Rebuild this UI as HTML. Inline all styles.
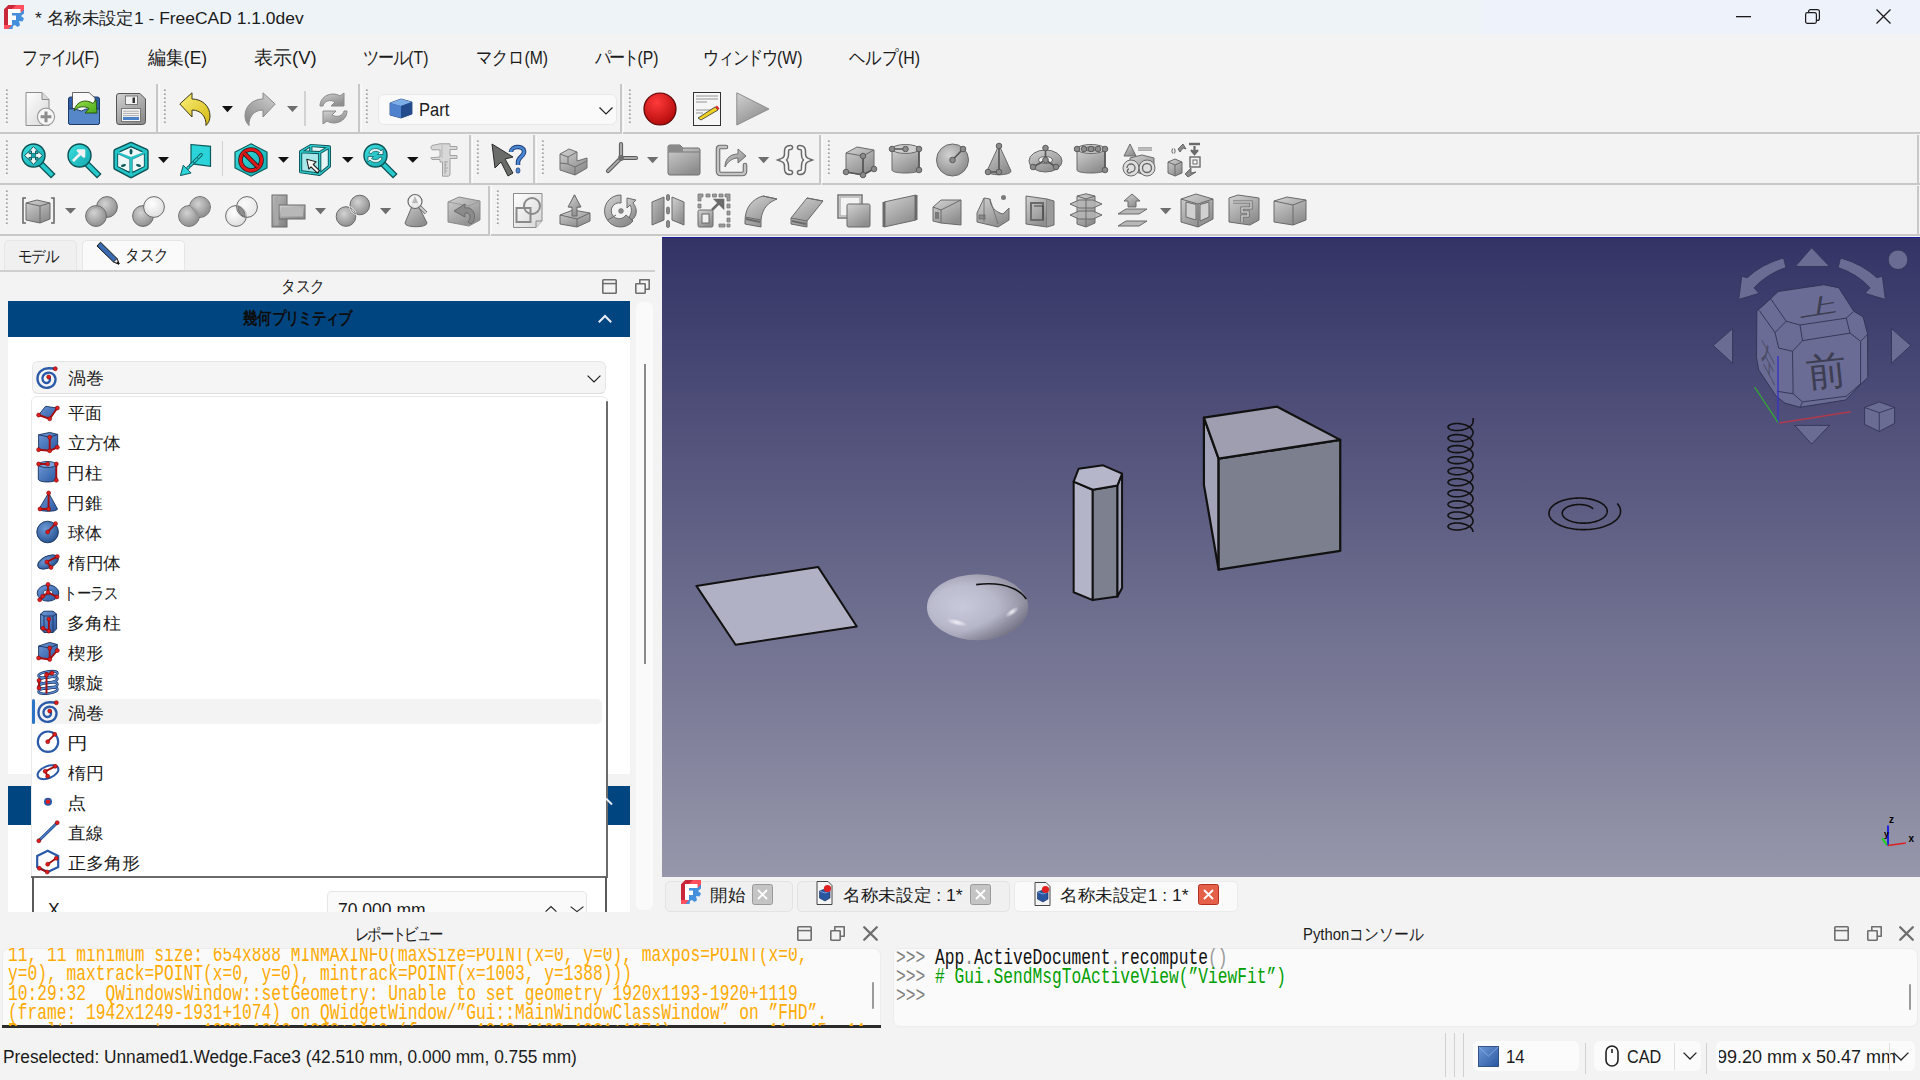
<!DOCTYPE html><html><head><meta charset="utf-8"><style>
*{box-sizing:border-box;margin:0;padding:0}
html,body{width:1920px;height:1080px;overflow:hidden;background:#f3f3f3;font-family:"Liberation Sans",sans-serif;color:#1b1b1b}
.ab{position:absolute}
.t{position:absolute;white-space:nowrap;line-height:1;transform-origin:0 0}
svg{position:absolute;overflow:visible}
</style></head><body>
<div class="ab" style="left:0px;top:0px;width:1482px;height:34px;background:#eef3f8"></div>
<div class="ab" style="left:1482px;top:0px;width:438px;height:34px;background:#eef2fb"></div>
<div class="t" style="left:35.00px;top:10px;font-size:17px;transform:scaleX(1.0267);">* 名称未設定1 - FreeCAD 1.1.0dev</div>
<svg style="left:1736px;top:16px" width="15" height="2" viewBox="0 0 15 2"><rect x="0" y="0" width="15" height="1.3" fill="#1a1a1a"/></svg>
<svg style="left:1805px;top:9px" width="15" height="15" viewBox="0 0 15 15"><rect x="0.6" y="3.6" width="10.8" height="10.8" rx="1.8" fill="none" stroke="#1a1a1a" stroke-width="1.2"/><path d="M3.6 3.6 V2.6 a2 2 0 0 1 2-2 H12.4 a2 2 0 0 1 2 2 V9.4 a2 2 0 0 1 -2 2 H11.4" fill="none" stroke="#1a1a1a" stroke-width="1.2"/></svg>
<svg style="left:1876px;top:9px" width="15" height="15" viewBox="0 0 15 15"><path d="M0.5 0.5 L14.5 14.5 M14.5 0.5 L0.5 14.5" stroke="#1a1a1a" stroke-width="1.3"/></svg>
<div class="t" style="left:22.30px;top:49px;font-size:18.5px;transform:scaleX(0.8500);"><span style="letter-spacing:-2.191px">ファイル</span>(F)</div>
<div class="t" style="left:147.50px;top:49px;font-size:18.5px;transform:scaleX(0.9435);">編集(E)</div>
<div class="t" style="left:254.00px;top:49px;font-size:18.5px;transform:scaleX(1.0000);">表示(V)</div>
<div class="t" style="left:363.15px;top:49px;font-size:18.5px;transform:scaleX(0.8500);"><span style="letter-spacing:-1.235px">ツール</span>(T)</div>
<div class="t" style="left:476.15px;top:49px;font-size:18.5px;transform:scaleX(0.8500);"><span style="letter-spacing:-0.020px">マクロ</span>(M)</div>
<div class="t" style="left:595.00px;top:49px;font-size:18.5px;transform:scaleX(0.8500);"><span style="letter-spacing:-2.294px">パート</span>(P)</div>
<div class="t" style="left:703.30px;top:49px;font-size:18.5px;transform:scaleX(0.8500);"><span style="letter-spacing:-1.576px">ウィンドウ</span>(W)</div>
<div class="t" style="left:849.00px;top:49px;font-size:18.5px;transform:scaleX(0.8598);"><span style="letter-spacing:0.000px">ヘルプ</span>(H)</div>
<div class="ab" style="left:0px;top:132px;width:157.5px;height:2px;background:#c8c8c8"></div>
<div class="ab" style="left:155.5px;top:84px;width:2px;height:50px;background:#c8c8c8"></div>
<div class="ab" style="left:158.5px;top:84px;width:1px;height:48px;background:#fbfbfb"></div>
<div class="ab" style="left:157.5px;top:132px;width:202.0px;height:2px;background:#c8c8c8"></div>
<div class="ab" style="left:357.5px;top:84px;width:2px;height:50px;background:#c8c8c8"></div>
<div class="ab" style="left:360.5px;top:84px;width:1px;height:48px;background:#fbfbfb"></div>
<div class="ab" style="left:359.5px;top:132px;width:262.0px;height:2px;background:#c8c8c8"></div>
<div class="ab" style="left:619.5px;top:84px;width:2px;height:50px;background:#c8c8c8"></div>
<div class="ab" style="left:622.5px;top:84px;width:1px;height:48px;background:#fbfbfb"></div>
<div class="ab" style="left:622.5px;top:132px;width:1297.5px;height:2px;background:#c8c8c8"></div>
<div class="ab" style="left:0px;top:183px;width:470.5px;height:2px;background:#c8c8c8"></div>
<div class="ab" style="left:468.5px;top:135px;width:2px;height:50px;background:#c8c8c8"></div>
<div class="ab" style="left:471.5px;top:135px;width:1px;height:48px;background:#fbfbfb"></div>
<div class="ab" style="left:470.5px;top:183px;width:64.0px;height:2px;background:#c8c8c8"></div>
<div class="ab" style="left:532.5px;top:135px;width:2px;height:50px;background:#c8c8c8"></div>
<div class="ab" style="left:535.5px;top:135px;width:1px;height:48px;background:#fbfbfb"></div>
<div class="ab" style="left:534.5px;top:183px;width:286.5px;height:2px;background:#c8c8c8"></div>
<div class="ab" style="left:819px;top:135px;width:2px;height:50px;background:#c8c8c8"></div>
<div class="ab" style="left:822px;top:135px;width:1px;height:48px;background:#fbfbfb"></div>
<div class="ab" style="left:822px;top:183px;width:1098px;height:2px;background:#c8c8c8"></div>
<div class="ab" style="left:0px;top:234px;width:490px;height:2px;background:#c8c8c8"></div>
<div class="ab" style="left:488px;top:186px;width:2px;height:50px;background:#c8c8c8"></div>
<div class="ab" style="left:491px;top:186px;width:1px;height:48px;background:#fbfbfb"></div>
<div class="ab" style="left:491px;top:234px;width:1429px;height:2px;background:#c8c8c8"></div>
<div class="ab" style="left:1917px;top:135px;width:2px;height:50px;background:#c8c8c8"></div>
<div class="ab" style="left:1917px;top:186px;width:2px;height:50px;background:#c8c8c8"></div>
<svg style="left:0;top:0;width:0;height:0" width="0" height="0"><defs>
<linearGradient id="gg" x1="0" y1="0" x2="0.6" y2="1"><stop offset="0" stop-color="#d2d2d2"/><stop offset="1" stop-color="#8e8e8e"/></linearGradient>
<linearGradient id="gg2" x1="0" y1="0" x2="1" y2="1"><stop offset="0" stop-color="#bdbdbd"/><stop offset="1" stop-color="#7e7e7e"/></linearGradient>
<linearGradient id="gl" x1="0" y1="0" x2="1" y2="1"><stop offset="0" stop-color="#ffffff"/><stop offset="1" stop-color="#d6d6d6"/></linearGradient>
<radialGradient id="gs" cx="0.4" cy="0.35" r="0.7"><stop offset="0" stop-color="#d2d2d2"/><stop offset="1" stop-color="#8a8a8a"/></radialGradient>
<radialGradient id="gsw" cx="0.4" cy="0.35" r="0.7"><stop offset="0" stop-color="#ffffff"/><stop offset="1" stop-color="#dcdcdc"/></radialGradient>
<linearGradient id="gt" x1="0" y1="0" x2="1" y2="1"><stop offset="0" stop-color="#3ee0e0"/><stop offset="1" stop-color="#12a8ae"/></linearGradient>
<linearGradient id="gy" x1="0" y1="0" x2="1" y2="1"><stop offset="0" stop-color="#fbf07a"/><stop offset="1" stop-color="#d4b812"/></linearGradient>
<radialGradient id="gr" cx="0.4" cy="0.3" r="0.75"><stop offset="0" stop-color="#ff3a3a"/><stop offset="1" stop-color="#b00808"/></radialGradient>
<linearGradient id="gb" x1="0" y1="0" x2="1" y2="1"><stop offset="0" stop-color="#6f9fe0"/><stop offset="1" stop-color="#2a5aa8"/></linearGradient>
<linearGradient id="ggreen" x1="0" y1="0" x2="1" y2="1"><stop offset="0" stop-color="#9be24a"/><stop offset="1" stop-color="#4aa81a"/></linearGradient>
</defs></svg>
<svg style="left:5px;top:89px" width="3" height="38" viewBox="0 0 3 38"><rect x="0.8" y="0.3" width="2" height="2" rx="0.8" fill="#a6a6a6"/><rect x="0" y="2.3" width="1.6" height="1" fill="#ffffff"/><rect x="0.8" y="4.3" width="2" height="2" rx="0.8" fill="#a6a6a6"/><rect x="0" y="6.3" width="1.6" height="1" fill="#ffffff"/><rect x="0.8" y="8.3" width="2" height="2" rx="0.8" fill="#a6a6a6"/><rect x="0" y="10.3" width="1.6" height="1" fill="#ffffff"/><rect x="0.8" y="12.3" width="2" height="2" rx="0.8" fill="#a6a6a6"/><rect x="0" y="14.3" width="1.6" height="1" fill="#ffffff"/><rect x="0.8" y="16.3" width="2" height="2" rx="0.8" fill="#a6a6a6"/><rect x="0" y="18.3" width="1.6" height="1" fill="#ffffff"/><rect x="0.8" y="20.3" width="2" height="2" rx="0.8" fill="#a6a6a6"/><rect x="0" y="22.3" width="1.6" height="1" fill="#ffffff"/><rect x="0.8" y="24.3" width="2" height="2" rx="0.8" fill="#a6a6a6"/><rect x="0" y="26.3" width="1.6" height="1" fill="#ffffff"/><rect x="0.8" y="28.3" width="2" height="2" rx="0.8" fill="#a6a6a6"/><rect x="0" y="30.3" width="1.6" height="1" fill="#ffffff"/><rect x="0.8" y="32.3" width="2" height="2" rx="0.8" fill="#a6a6a6"/><rect x="0" y="34.3" width="1.6" height="1" fill="#ffffff"/></svg>
<svg style="left:25px;top:92px" width="32" height="34" viewBox="0 0 32 34"><path d="M1,0.5 H17 L24,7.5 V33.5 H1 Z" fill="url(#gl)" stroke="#8c8c8c"/><path d="M17,0.5 V7.5 H24" fill="#d8d8d8" stroke="#8c8c8c"/><circle cx="21" cy="24.8" r="8.6" fill="#f6f6f6" stroke="#9c9c9c" stroke-width="1.2"/><path d="M21,19.4 V30.2 M15.6,24.8 H26.4" stroke="#8c8c8c" stroke-width="3"/></svg>
<svg style="left:68px;top:92px" width="32" height="33" viewBox="0 0 32 33"><rect x="0.5" y="5" width="31" height="27.5" rx="2" fill="#2f5fa8" stroke="#1d3a66"/><path d="M4.5,0.5 H21 L27,6 V22 H4.5 Z" fill="#fafafa" stroke="#444" stroke-width="0.8"/><path d="M0.5,17 Q7,15.5 10,18 Q13,20.5 18,17 H31.5 V30.5 Q31.5,32.5 29.5,32.5 H2.5 Q0.5,32.5 0.5,30.5 Z" fill="#5587c9" stroke="#1d3a66"/><path d="M6,19 C8,9 18,6.5 25,11.5 L28,7.5 L29,21 L17,21 L21,16.5 C16,13.5 10,14.5 6,19 Z" fill="url(#ggreen)" stroke="#1f4d0a" stroke-width="0.9"/></svg>
<svg style="left:116px;top:93px" width="30" height="32" viewBox="0 0 30 32"><path d="M3,0.5 H24 L29.5,6 V28.5 Q29.5,31.5 26.5,31.5 H3 Q0.5,31.5 0.5,28.5 V3 Q0.5,0.5 3,0.5Z" fill="url(#gg)" stroke="#555"/><rect x="9.5" y="3" width="12" height="8.5" fill="#f2f2f2" stroke="#777"/><rect x="16.5" y="4.5" width="2.5" height="5.5" fill="#333"/><rect x="5.5" y="15.5" width="19" height="13" fill="#f4f4f4" stroke="#777"/><path d="M7,18.2 H23 M7,20.4 H23 M7,22.6 H23" stroke="#999" stroke-width="0.8"/><rect x="7" y="24" width="16" height="3" fill="#4a82c8"/></svg>
<svg style="left:163px;top:89px" width="3" height="38" viewBox="0 0 3 38"><rect x="0.8" y="0.3" width="2" height="2" rx="0.8" fill="#a6a6a6"/><rect x="0" y="2.3" width="1.6" height="1" fill="#ffffff"/><rect x="0.8" y="4.3" width="2" height="2" rx="0.8" fill="#a6a6a6"/><rect x="0" y="6.3" width="1.6" height="1" fill="#ffffff"/><rect x="0.8" y="8.3" width="2" height="2" rx="0.8" fill="#a6a6a6"/><rect x="0" y="10.3" width="1.6" height="1" fill="#ffffff"/><rect x="0.8" y="12.3" width="2" height="2" rx="0.8" fill="#a6a6a6"/><rect x="0" y="14.3" width="1.6" height="1" fill="#ffffff"/><rect x="0.8" y="16.3" width="2" height="2" rx="0.8" fill="#a6a6a6"/><rect x="0" y="18.3" width="1.6" height="1" fill="#ffffff"/><rect x="0.8" y="20.3" width="2" height="2" rx="0.8" fill="#a6a6a6"/><rect x="0" y="22.3" width="1.6" height="1" fill="#ffffff"/><rect x="0.8" y="24.3" width="2" height="2" rx="0.8" fill="#a6a6a6"/><rect x="0" y="26.3" width="1.6" height="1" fill="#ffffff"/><rect x="0.8" y="28.3" width="2" height="2" rx="0.8" fill="#a6a6a6"/><rect x="0" y="30.3" width="1.6" height="1" fill="#ffffff"/><rect x="0.8" y="32.3" width="2" height="2" rx="0.8" fill="#a6a6a6"/><rect x="0" y="34.3" width="1.6" height="1" fill="#ffffff"/></svg>
<svg style="left:179px;top:92px" width="33" height="34" viewBox="0 0 33 34"><path d="M0.8,12 L13,0.8 L13,7 C23,7 31,14 31,24 C31,28 29.5,31 27,33.5 C27.5,25 22,18 13,18 L13,25 Z" fill="url(#gy)" stroke="#3d3a1a" stroke-width="1"/></svg>
<svg style="left:222px;top:105.8px" width="11" height="6.200000000000003" viewBox="0 0 11 6.200000000000003"><polygon points="0,0 11,0 5.5,6.200000000000003" fill="#111"/></svg>
<svg style="left:244px;top:92px" width="33" height="34" viewBox="0 0 33 34"><g transform="translate(32,0) scale(-1,1)"><path d="M0.8,12 L13,0.8 L13,7 C23,7 31,14 31,24 C31,28 29.5,31 27,33.5 C27.5,25 22,18 13,18 L13,25 Z" fill="url(#gg)" stroke="#8a8a8a" stroke-width="1"/></g></svg>
<svg style="left:287px;top:106px" width="11" height="6" viewBox="0 0 11 6"><polygon points="0,0 11,0 5.5,6" fill="#6e6e6e"/></svg>
<div class="ab" style="left:304px;top:91px;width:1.5px;height:35px;background:#d2d2d2"></div>
<svg style="left:318px;top:92px" width="31" height="34" viewBox="0 0 31 34"><path d="M2,14 C2,4 14,-1 22,4 L26,1 V14 H13 L17,10 C12,7 6,9 5,14 Z" fill="url(#gg)" stroke="#8a8a8a"/><path d="M29,19 C29,29 17,34 9,29 L5,32 V19 H18 L14,23 C19,26 25,24 26,19 Z" fill="url(#gg)" stroke="#8a8a8a"/></svg>
<svg style="left:365px;top:89px" width="3" height="38" viewBox="0 0 3 38"><rect x="0.8" y="0.3" width="2" height="2" rx="0.8" fill="#a6a6a6"/><rect x="0" y="2.3" width="1.6" height="1" fill="#ffffff"/><rect x="0.8" y="4.3" width="2" height="2" rx="0.8" fill="#a6a6a6"/><rect x="0" y="6.3" width="1.6" height="1" fill="#ffffff"/><rect x="0.8" y="8.3" width="2" height="2" rx="0.8" fill="#a6a6a6"/><rect x="0" y="10.3" width="1.6" height="1" fill="#ffffff"/><rect x="0.8" y="12.3" width="2" height="2" rx="0.8" fill="#a6a6a6"/><rect x="0" y="14.3" width="1.6" height="1" fill="#ffffff"/><rect x="0.8" y="16.3" width="2" height="2" rx="0.8" fill="#a6a6a6"/><rect x="0" y="18.3" width="1.6" height="1" fill="#ffffff"/><rect x="0.8" y="20.3" width="2" height="2" rx="0.8" fill="#a6a6a6"/><rect x="0" y="22.3" width="1.6" height="1" fill="#ffffff"/><rect x="0.8" y="24.3" width="2" height="2" rx="0.8" fill="#a6a6a6"/><rect x="0" y="26.3" width="1.6" height="1" fill="#ffffff"/><rect x="0.8" y="28.3" width="2" height="2" rx="0.8" fill="#a6a6a6"/><rect x="0" y="30.3" width="1.6" height="1" fill="#ffffff"/><rect x="0.8" y="32.3" width="2" height="2" rx="0.8" fill="#a6a6a6"/><rect x="0" y="34.3" width="1.6" height="1" fill="#ffffff"/></svg>
<div class="ab" style="left:378px;top:94px;width:239px;height:31px;background:#fafafa;border:1px solid #e8e8e8;border-radius:6px"></div>
<svg style="left:389px;top:98px" width="24" height="21" viewBox="0 0 24 21"><path d="M1,5 L12,1 L23,4 V16 L12,20 L1,17 Z" fill="#2f5ea8" stroke="#1a3a70" stroke-width="0.8"/><path d="M1,5 L12,8 L23,4 L12,1 Z" fill="#7eaee8"/><path d="M12,8 V20 L23,16 V4 Z" fill="#244c8c"/><path d="M1,5 L12,8 V20 L1,17 Z" fill="#4f82cc"/></svg>
<div class="t" style="left:418.63px;top:100px;font-size:19px;transform:scaleX(0.8676);">Part</div>
<svg style="left:599px;top:107px" width="14" height="8" viewBox="0 0 14 8"><path d="M0.5,0.5 L7,7 L13.5,0.5" fill="none" stroke="#222" stroke-width="1.2"/></svg>
<svg style="left:628px;top:89px" width="3" height="38" viewBox="0 0 3 38"><rect x="0.8" y="0.3" width="2" height="2" rx="0.8" fill="#a6a6a6"/><rect x="0" y="2.3" width="1.6" height="1" fill="#ffffff"/><rect x="0.8" y="4.3" width="2" height="2" rx="0.8" fill="#a6a6a6"/><rect x="0" y="6.3" width="1.6" height="1" fill="#ffffff"/><rect x="0.8" y="8.3" width="2" height="2" rx="0.8" fill="#a6a6a6"/><rect x="0" y="10.3" width="1.6" height="1" fill="#ffffff"/><rect x="0.8" y="12.3" width="2" height="2" rx="0.8" fill="#a6a6a6"/><rect x="0" y="14.3" width="1.6" height="1" fill="#ffffff"/><rect x="0.8" y="16.3" width="2" height="2" rx="0.8" fill="#a6a6a6"/><rect x="0" y="18.3" width="1.6" height="1" fill="#ffffff"/><rect x="0.8" y="20.3" width="2" height="2" rx="0.8" fill="#a6a6a6"/><rect x="0" y="22.3" width="1.6" height="1" fill="#ffffff"/><rect x="0.8" y="24.3" width="2" height="2" rx="0.8" fill="#a6a6a6"/><rect x="0" y="26.3" width="1.6" height="1" fill="#ffffff"/><rect x="0.8" y="28.3" width="2" height="2" rx="0.8" fill="#a6a6a6"/><rect x="0" y="30.3" width="1.6" height="1" fill="#ffffff"/><rect x="0.8" y="32.3" width="2" height="2" rx="0.8" fill="#a6a6a6"/><rect x="0" y="34.3" width="1.6" height="1" fill="#ffffff"/></svg>
<svg style="left:643px;top:92px" width="34" height="34" viewBox="0 0 34 34"><circle cx="17" cy="17" r="16" fill="url(#gr)" stroke="#5a0000" stroke-width="1.2"/></svg>
<svg style="left:693px;top:92px" width="28" height="34" viewBox="0 0 28 34"><rect x="0.5" y="0.5" width="27" height="33" fill="#f6f6f6" stroke="#333"/><path d="M3,4 H25 M3,7 H25 M3,10 H14 M3,18 H25 M3,21 H10" stroke="#888" stroke-width="0.9"/><path d="M5,26 L22,15 L25,18 L8,28 Z" fill="#f0d020" stroke="#333" stroke-width="0.8"/><path d="M22,15 L24,13.5 L26.5,16.5 L25,18Z" fill="#d83030"/></svg>
<svg style="left:736px;top:92px" width="34" height="34" viewBox="0 0 34 34"><path d="M0.8,0.8 L33,17 L0.8,33 Z" fill="url(#gg)" stroke="#8c8c8c" stroke-width="1"/></svg>
<svg style="left:5px;top:140px" width="3" height="38" viewBox="0 0 3 38"><rect x="0.8" y="0.3" width="2" height="2" rx="0.8" fill="#a6a6a6"/><rect x="0" y="2.3" width="1.6" height="1" fill="#ffffff"/><rect x="0.8" y="4.3" width="2" height="2" rx="0.8" fill="#a6a6a6"/><rect x="0" y="6.3" width="1.6" height="1" fill="#ffffff"/><rect x="0.8" y="8.3" width="2" height="2" rx="0.8" fill="#a6a6a6"/><rect x="0" y="10.3" width="1.6" height="1" fill="#ffffff"/><rect x="0.8" y="12.3" width="2" height="2" rx="0.8" fill="#a6a6a6"/><rect x="0" y="14.3" width="1.6" height="1" fill="#ffffff"/><rect x="0.8" y="16.3" width="2" height="2" rx="0.8" fill="#a6a6a6"/><rect x="0" y="18.3" width="1.6" height="1" fill="#ffffff"/><rect x="0.8" y="20.3" width="2" height="2" rx="0.8" fill="#a6a6a6"/><rect x="0" y="22.3" width="1.6" height="1" fill="#ffffff"/><rect x="0.8" y="24.3" width="2" height="2" rx="0.8" fill="#a6a6a6"/><rect x="0" y="26.3" width="1.6" height="1" fill="#ffffff"/><rect x="0.8" y="28.3" width="2" height="2" rx="0.8" fill="#a6a6a6"/><rect x="0" y="30.3" width="1.6" height="1" fill="#ffffff"/><rect x="0.8" y="32.3" width="2" height="2" rx="0.8" fill="#a6a6a6"/><rect x="0" y="34.3" width="1.6" height="1" fill="#ffffff"/></svg>
<svg style="left:21px;top:143px" width="33" height="33" viewBox="0 0 33 33"><path d="M18,19 L30,31" stroke="#0c4f52" stroke-width="6.5" stroke-linecap="square"/><path d="M18,19 L30,31" stroke="#27c9cc" stroke-width="4" stroke-linecap="square"/><circle cx="12.5" cy="12.5" r="11.5" fill="url(#gt)" stroke="#0c4f52" stroke-width="1.4"/><path d="M12.5,3.5 L16.5,8 H14.5 V10.5 H17 V8.5 L21.5,12.5 L17,16.5 V14.5 H14.5 V17 H16.5 L12.5,21.5 L8.5,17 H10.5 V14.5 H8 V16.5 L3.5,12.5 L8,8.5 V10.5 H10.5 V8 H8.5 Z" fill="#eef8f8" stroke="#0c4f52" stroke-width="0.9"/><rect x="10.2" y="10.2" width="4.6" height="4.6" fill="#16a8ac" stroke="#0c4f52" stroke-width="0.6"/></svg>
<svg style="left:67px;top:143px" width="33" height="33" viewBox="0 0 33 33"><path d="M18,19 L30,31" stroke="#0c4f52" stroke-width="6.5" stroke-linecap="square"/><path d="M18,19 L30,31" stroke="#27c9cc" stroke-width="4" stroke-linecap="square"/><circle cx="12.5" cy="12.5" r="11.5" fill="url(#gt)" stroke="#0c4f52" stroke-width="1.4"/><path d="M6,18 L15,9 M11,7.5 H17 V13.5 Z" stroke="#f2f2f2" stroke-width="2.6" fill="#f2f2f2" stroke-linejoin="round"/></svg>
<svg style="left:114px;top:143px" width="34" height="34" viewBox="0 0 34 34"><path d="M17,1 L32.5,8 V25 L17,33 L1.5,25 V8 Z" fill="#eef8f8"/><g fill="none" stroke-linejoin="round"><path d="M17,1.5 L32,8.3 V24.7 L17,32.5 L2,24.7 V8.3 Z M2,8.3 L17,15.5 L32,8.3 M17,15.5 V32.5" stroke="#0c5052" stroke-width="5.4"/><path d="M17,1.5 L32,8.3 V24.7 L17,32.5 L2,24.7 V8.3 Z M2,8.3 L17,15.5 L32,8.3 M17,15.5 V32.5" stroke="#22c4c8" stroke-width="2.6"/></g><path d="M17,4.8 L28.5,9.6 L17,14 L5.5,9.6 Z" fill="#eef8f8"/><path d="M4.2,11.2 L15.4,16.6 V28.6 L4.2,23.2 Z M29.8,11.2 L18.6,16.6 V28.6 L29.8,23.2 Z" fill="#eef8f8"/><ellipse cx="17" cy="8.6" rx="1.5" ry="2.8" fill="#0c5a5c"/><ellipse cx="9.5" cy="22.5" rx="2.6" ry="1.3" fill="#0c5a5c" transform="rotate(-15 9.5 22.5)"/><ellipse cx="24.5" cy="22.5" rx="2.6" ry="1.3" fill="#0c5a5c" transform="rotate(15 24.5 22.5)"/></svg>
<svg style="left:158px;top:157px" width="11" height="6" viewBox="0 0 11 6"><polygon points="0,0 11,0 5.5,6" fill="#111"/></svg>
<svg style="left:180px;top:144px" width="32" height="32" viewBox="0 0 32 32"><path d="M11,0.5 L30.5,2.3 V22.3 L11,19.7 Z" fill="#2ad4d8" stroke="#0c5a5c" stroke-width="1.2"/><path d="M21.1,10.8 L7.8,24.1" stroke="#0c5a5c" stroke-width="3.4" stroke-dasharray="3.6,2.2" stroke-linecap="round"/><path d="M21.1,10.8 L7.8,24.1" stroke="#2ad4d8" stroke-width="1.6" stroke-dasharray="3.6,2.2" stroke-linecap="round"/><path d="M0.4,31.6 L3.3,21.2 L11.1,29 Z" fill="#2ad4d8" stroke="#0c5a5c" stroke-width="1"/></svg>
<div class="ab" style="left:221.5px;top:141px;width:1.5px;height:35px;background:#d0d0d0"></div>
<svg style="left:234px;top:143px" width="34" height="34" viewBox="0 0 34 34"><path d="M17,0.8 L33,9 V25 L17,33.2 L1,25 V9 Z" fill="url(#gt)" stroke="#0c5a5c" stroke-width="1.2"/><circle cx="17" cy="17" r="10.5" fill="none" stroke="#222" stroke-width="4.6"/><circle cx="17" cy="17" r="10.5" fill="none" stroke="#e01818" stroke-width="3"/><path d="M10,10 L24,24" stroke="#222" stroke-width="4.6"/><path d="M10,10 L24,24" stroke="#e01818" stroke-width="3"/></svg>
<svg style="left:278px;top:157px" width="11" height="5.699999999999989" viewBox="0 0 11 5.699999999999989"><polygon points="0,0 11,0 5.5,5.699999999999989" fill="#111"/></svg>
<svg style="left:300px;top:144px" width="31" height="31" viewBox="0 0 31 31"><path d="M0.6,7.7 L10.8,1.5 L29.4,2.9 V22.3 L19.7,30.3 L0.6,27.7 Z" fill="#e6f6f6"/><path d="M0.6,7.7 L19.7,8.6 V30.3 L0.6,27.7 Z" fill="#a8e8ea"/><g fill="none" stroke-linejoin="round"><path d="M0.6,7.7 L10.8,1.5 L29.4,2.9 V22.3 L19.7,30.3 L0.6,27.7 Z M0.6,7.7 L19.7,8.6 L29.4,2.9 M19.7,8.6 V30.3 M10.8,1.5 V7" stroke="#0c5052" stroke-width="3.2"/><path d="M0.6,7.7 L10.8,1.5 L29.4,2.9 V22.3 L19.7,30.3 L0.6,27.7 Z M0.6,7.7 L19.7,8.6 L29.4,2.9 M19.7,8.6 V30.3 M10.8,1.5 V7" stroke="#2cc8cc" stroke-width="1.4"/></g><path d="M6.8,15.3 L16,17.8 L13.3,20.5 L19.5,26.7 L17.2,29 L11,22.8 L8.8,25 Z" fill="#f6f6f2" stroke="#222" stroke-width="1.1" stroke-linejoin="round"/></svg>
<svg style="left:341.7px;top:157px" width="11.600000000000023" height="5.699999999999989" viewBox="0 0 11.600000000000023 5.699999999999989"><polygon points="0,0 11.600000000000023,0 5.800000000000011,5.699999999999989" fill="#111"/></svg>
<svg style="left:363px;top:143px" width="34" height="33" viewBox="0 0 34 33"><path d="M18,19 L30,31" stroke="#0c4f52" stroke-width="6.5" stroke-linecap="square"/><path d="M18,19 L30,31" stroke="#27c9cc" stroke-width="4" stroke-linecap="square"/><circle cx="12.5" cy="12.5" r="11.5" fill="url(#gt)" stroke="#0c4f52" stroke-width="1.4"/><path d="M6,10 C7,5 15,4 18,8 L20,6 V11.5 H14.5 L16.5,9.5 C14,7.5 9,8 8,11 Z M19,15 C18,20 10,21 7,17 L5,19 V13.5 H10.5 L8.5,15.5 C11,17.5 16,17 17,14 Z" fill="#e8f8f8" stroke="#0c4f52" stroke-width="0.7"/></svg>
<svg style="left:406.7px;top:157px" width="11.600000000000023" height="5.699999999999989" viewBox="0 0 11.600000000000023 5.699999999999989"><polygon points="0,0 11.600000000000023,0 5.800000000000011,5.699999999999989" fill="#111"/></svg>
<svg style="left:430px;top:143px" width="28" height="34" viewBox="0 0 28 34"><path d="M2,2.5 L10,0.8 H20 V3.5 H27 V6.5 H20 V12.5 H27 V15.5 H20 V32 L18.5,33.2 H12.5 V19 H10 V16.5 H2 L0.8,14.8 L10,14 V6.8 H2 L0.8,4.5 Z" fill="#d8d8d8" stroke="#a2a2a2" stroke-width="1"/><path d="M15,18 V31 M15,19 H18 M15,22 H17 M15,25 H18 M15,28 H17" stroke="#9a9a9a" stroke-width="0.8"/><path d="M12,2 V15" stroke="#b8b8b8" stroke-width="1"/></svg>
<svg style="left:476px;top:140px" width="3" height="38" viewBox="0 0 3 38"><rect x="0.8" y="0.3" width="2" height="2" rx="0.8" fill="#a6a6a6"/><rect x="0" y="2.3" width="1.6" height="1" fill="#ffffff"/><rect x="0.8" y="4.3" width="2" height="2" rx="0.8" fill="#a6a6a6"/><rect x="0" y="6.3" width="1.6" height="1" fill="#ffffff"/><rect x="0.8" y="8.3" width="2" height="2" rx="0.8" fill="#a6a6a6"/><rect x="0" y="10.3" width="1.6" height="1" fill="#ffffff"/><rect x="0.8" y="12.3" width="2" height="2" rx="0.8" fill="#a6a6a6"/><rect x="0" y="14.3" width="1.6" height="1" fill="#ffffff"/><rect x="0.8" y="16.3" width="2" height="2" rx="0.8" fill="#a6a6a6"/><rect x="0" y="18.3" width="1.6" height="1" fill="#ffffff"/><rect x="0.8" y="20.3" width="2" height="2" rx="0.8" fill="#a6a6a6"/><rect x="0" y="22.3" width="1.6" height="1" fill="#ffffff"/><rect x="0.8" y="24.3" width="2" height="2" rx="0.8" fill="#a6a6a6"/><rect x="0" y="26.3" width="1.6" height="1" fill="#ffffff"/><rect x="0.8" y="28.3" width="2" height="2" rx="0.8" fill="#a6a6a6"/><rect x="0" y="30.3" width="1.6" height="1" fill="#ffffff"/><rect x="0.8" y="32.3" width="2" height="2" rx="0.8" fill="#a6a6a6"/><rect x="0" y="34.3" width="1.6" height="1" fill="#ffffff"/></svg>
<svg style="left:491px;top:143px" width="36" height="34" viewBox="0 0 36 34"><path d="M1,1 L22,14 L14,16 L22,30 L17,33 L10,19 L4,25 Z" fill="#6a6c6a" stroke="#2a2a2a" stroke-width="1"/><path d="M20,9 C20,3 32,2 33,8 C34,13 27,14 27,19 V22" fill="none" stroke="#1f3f78" stroke-width="4.5"/><path d="M20,9 C20,3 32,2 33,8 C34,13 27,14 27,19 V22" fill="none" stroke="#4a86d0" stroke-width="2.6"/><rect x="25.2" y="25" width="3.6" height="5" rx="1.5" fill="#4a86d0" stroke="#1f3f78" stroke-width="0.8"/></svg>
<svg style="left:541px;top:140px" width="3" height="38" viewBox="0 0 3 38"><rect x="0.8" y="0.3" width="2" height="2" rx="0.8" fill="#a6a6a6"/><rect x="0" y="2.3" width="1.6" height="1" fill="#ffffff"/><rect x="0.8" y="4.3" width="2" height="2" rx="0.8" fill="#a6a6a6"/><rect x="0" y="6.3" width="1.6" height="1" fill="#ffffff"/><rect x="0.8" y="8.3" width="2" height="2" rx="0.8" fill="#a6a6a6"/><rect x="0" y="10.3" width="1.6" height="1" fill="#ffffff"/><rect x="0.8" y="12.3" width="2" height="2" rx="0.8" fill="#a6a6a6"/><rect x="0" y="14.3" width="1.6" height="1" fill="#ffffff"/><rect x="0.8" y="16.3" width="2" height="2" rx="0.8" fill="#a6a6a6"/><rect x="0" y="18.3" width="1.6" height="1" fill="#ffffff"/><rect x="0.8" y="20.3" width="2" height="2" rx="0.8" fill="#a6a6a6"/><rect x="0" y="22.3" width="1.6" height="1" fill="#ffffff"/><rect x="0.8" y="24.3" width="2" height="2" rx="0.8" fill="#a6a6a6"/><rect x="0" y="26.3" width="1.6" height="1" fill="#ffffff"/><rect x="0.8" y="28.3" width="2" height="2" rx="0.8" fill="#a6a6a6"/><rect x="0" y="30.3" width="1.6" height="1" fill="#ffffff"/><rect x="0.8" y="32.3" width="2" height="2" rx="0.8" fill="#a6a6a6"/><rect x="0" y="34.3" width="1.6" height="1" fill="#ffffff"/></svg>
<svg style="left:559px;top:144px" width="29" height="32" viewBox="0 0 29 32"><path d="M1,10 L10,5 L18,8 L18,17 L28,14 L28,24 L16,31 L1,26 Z" fill="url(#gg)" stroke="#6e6e6e"/><path d="M1,10 L9,13 L18,8 M9,13 V20 L16,23 L28,17 M16,23 V31 M1,19 L9,20" fill="none" stroke="#6e6e6e"/></svg>
<svg style="left:606px;top:143px" width="31" height="31" viewBox="0 0 31 31"><path d="M15,1 V15 M15,15 H30 M15,15 L2,28" stroke="#5a5a5a" stroke-width="4.2" stroke-linecap="round"/><path d="M15,1 V15 M15,15 H30 M15,15 L2,28" stroke="#a8a8a8" stroke-width="2.2" stroke-linecap="round"/><circle cx="15" cy="15" r="3" fill="#6e6e6e"/></svg>
<svg style="left:646.7px;top:156.7px" width="11.299999999999955" height="6.300000000000011" viewBox="0 0 11.299999999999955 6.300000000000011"><polygon points="0,0 11.299999999999955,0 5.649999999999977,6.300000000000011" fill="#6e6e6e"/></svg>
<svg style="left:667px;top:144px" width="34" height="32" viewBox="0 0 34 32"><path d="M1,3 Q1,1 3,1 H13 L16,4 H31 Q33,4 33,6 V29 Q33,31 31,31 H3 Q1,31 1,29 Z" fill="url(#gg)" stroke="#6e6e6e"/><path d="M1,8 H33" stroke="#7a7a7a" stroke-width="1"/><path d="M1,3 Q1,1 3,1 H13 L16,4 V8 H1 Z" fill="#8a8a8a"/></svg>
<svg style="left:716px;top:144px" width="31" height="32" viewBox="0 0 31 32"><path d="M10,3 H4 Q2,3 2,5 V27 Q2,30 5,30 H26 Q29,30 29,27 V21" fill="none" stroke="#6e6e6e" stroke-width="4.6" stroke-linecap="round"/><path d="M10,3 H4 Q2,3 2,5 V27 Q2,30 5,30 H26 Q29,30 29,27 V21" fill="none" stroke="#c4c4c4" stroke-width="2.4" stroke-linecap="round"/><path d="M9,23 C9,14 15,10 22,10 L22,5 L30,12 L22,19 L22,14 C17,14 12,17 9,23 Z" fill="url(#gg)" stroke="#6e6e6e"/></svg>
<svg style="left:757.7px;top:156.7px" width="11.299999999999955" height="6.300000000000011" viewBox="0 0 11.299999999999955 6.300000000000011"><polygon points="0,0 11.299999999999955,0 5.649999999999977,6.300000000000011" fill="#6e6e6e"/></svg>
<svg style="left:779px;top:145px" width="32" height="30" viewBox="0 0 32 30"><path d="M11.5,2.5 C7,2.5 7.5,5.5 7.5,9 C7.5,12.5 6.5,14 4,15 C6.5,16 7.5,17.5 7.5,21 C7.5,24.5 7,27.5 11.5,27.5 M20.5,2.5 C25,2.5 24.5,5.5 24.5,9 C24.5,12.5 25.5,14 28,15 C25.5,16 24.5,17.5 24.5,21 C24.5,24.5 25,27.5 20.5,27.5" fill="none" stroke="#6a6a6a" stroke-width="5.6" stroke-linecap="round"/><path d="M11.5,2.5 C7,2.5 7.5,5.5 7.5,9 C7.5,12.5 6.5,14 4,15 C6.5,16 7.5,17.5 7.5,21 C7.5,24.5 7,27.5 11.5,27.5 M20.5,2.5 C25,2.5 24.5,5.5 24.5,9 C24.5,12.5 25.5,14 28,15 C25.5,16 24.5,17.5 24.5,21 C24.5,24.5 25,27.5 20.5,27.5" fill="none" stroke="#f6f6f6" stroke-width="2.6" stroke-linecap="round"/></svg>
<svg style="left:827px;top:140px" width="3" height="38" viewBox="0 0 3 38"><rect x="0.8" y="0.3" width="2" height="2" rx="0.8" fill="#a6a6a6"/><rect x="0" y="2.3" width="1.6" height="1" fill="#ffffff"/><rect x="0.8" y="4.3" width="2" height="2" rx="0.8" fill="#a6a6a6"/><rect x="0" y="6.3" width="1.6" height="1" fill="#ffffff"/><rect x="0.8" y="8.3" width="2" height="2" rx="0.8" fill="#a6a6a6"/><rect x="0" y="10.3" width="1.6" height="1" fill="#ffffff"/><rect x="0.8" y="12.3" width="2" height="2" rx="0.8" fill="#a6a6a6"/><rect x="0" y="14.3" width="1.6" height="1" fill="#ffffff"/><rect x="0.8" y="16.3" width="2" height="2" rx="0.8" fill="#a6a6a6"/><rect x="0" y="18.3" width="1.6" height="1" fill="#ffffff"/><rect x="0.8" y="20.3" width="2" height="2" rx="0.8" fill="#a6a6a6"/><rect x="0" y="22.3" width="1.6" height="1" fill="#ffffff"/><rect x="0.8" y="24.3" width="2" height="2" rx="0.8" fill="#a6a6a6"/><rect x="0" y="26.3" width="1.6" height="1" fill="#ffffff"/><rect x="0.8" y="28.3" width="2" height="2" rx="0.8" fill="#a6a6a6"/><rect x="0" y="30.3" width="1.6" height="1" fill="#ffffff"/><rect x="0.8" y="32.3" width="2" height="2" rx="0.8" fill="#a6a6a6"/><rect x="0" y="34.3" width="1.6" height="1" fill="#ffffff"/></svg>
<svg style="left:843px;top:145px" width="34" height="32" viewBox="0 0 34 32"><path d="M3,8 L14,2 L31,5 V24 L20,30 L3,27 Z" fill="url(#gg)" stroke="#6a6a6a"/><path d="M3,8 L20,11 L31,5 M20,11 V30" fill="none" stroke="#6a6a6a"/><path d="M20,11 V30" stroke="#555" stroke-width="1.6"/><path d="M3,27 L20,30 L31,24" fill="none" stroke="#555" stroke-width="1.6"/><circle cx="20" cy="11" r="2.8" fill="#8a8a8a" stroke="#555" stroke-width="0.9"/><circle cx="3" cy="27" r="2.8" fill="#8a8a8a" stroke="#555" stroke-width="0.9"/><circle cx="20" cy="30" r="2.8" fill="#8a8a8a" stroke="#555" stroke-width="0.9"/><circle cx="31" cy="24" r="2.8" fill="#8a8a8a" stroke="#555" stroke-width="0.9"/></svg>
<svg style="left:889px;top:143px" width="33" height="33" viewBox="0 0 33 33"><path d="M3,6 V27 C3,31 30,31 30,27 V6" fill="url(#gg)" stroke="#6a6a6a"/><ellipse cx="16.5" cy="6" rx="13.5" ry="4.5" fill="#cfcfcf" stroke="#6a6a6a"/><path d="M3,6 H16.5 M30,6 V27" stroke="#555" stroke-width="1.6"/><circle cx="3" cy="6" r="2.8" fill="#8a8a8a" stroke="#555" stroke-width="0.9"/><circle cx="16.5" cy="6" r="2.8" fill="#8a8a8a" stroke="#555" stroke-width="0.9"/><circle cx="30" cy="6" r="2.8" fill="#8a8a8a" stroke="#555" stroke-width="0.9"/><circle cx="30" cy="27" r="2.8" fill="#8a8a8a" stroke="#555" stroke-width="0.9"/></svg>
<svg style="left:935px;top:143px" width="35" height="34" viewBox="0 0 35 34"><circle cx="17.5" cy="17" r="16" fill="url(#gs)" stroke="#6a6a6a"/><path d="M17.5,17 L28,6" stroke="#555" stroke-width="1.8"/><circle cx="17.5" cy="17" r="2.8" fill="#8a8a8a" stroke="#555" stroke-width="0.9"/><circle cx="28" cy="6" r="2.8" fill="#8a8a8a" stroke="#555" stroke-width="0.9"/></svg>
<svg style="left:985px;top:143px" width="28" height="34" viewBox="0 0 28 34"><path d="M14,2 L26,28 C26,33 2,33 2,28 Z" fill="url(#gg)" stroke="#6a6a6a"/><path d="M14,2 V29 H3" fill="none" stroke="#555" stroke-width="1.6"/><circle cx="14" cy="3" r="2.8" fill="#8a8a8a" stroke="#555" stroke-width="0.9"/><circle cx="14" cy="29" r="2.8" fill="#8a8a8a" stroke="#555" stroke-width="0.9"/><circle cx="3" cy="29" r="2.8" fill="#8a8a8a" stroke="#555" stroke-width="0.9"/></svg>
<svg style="left:1028px;top:145px" width="35" height="30" viewBox="0 0 35 30"><ellipse cx="17.5" cy="16" rx="16.5" ry="11" fill="url(#gg)" stroke="#6a6a6a"/><ellipse cx="17.5" cy="15" rx="7" ry="3.5" fill="#f3f3f3" stroke="#6a6a6a"/><path d="M17.5,2 V15 L28,22 M17.5,15 L5,22" fill="none" stroke="#555" stroke-width="1.6"/><circle cx="17.5" cy="3" r="2.8" fill="#8a8a8a" stroke="#555" stroke-width="0.9"/><circle cx="17.5" cy="15" r="2.8" fill="#8a8a8a" stroke="#555" stroke-width="0.9"/><circle cx="28" cy="22" r="2.8" fill="#8a8a8a" stroke="#555" stroke-width="0.9"/><circle cx="5" cy="22" r="2.8" fill="#8a8a8a" stroke="#555" stroke-width="0.9"/></svg>
<svg style="left:1074px;top:143px" width="35" height="34" viewBox="0 0 35 34"><path d="M3,6 V27 C3,31 31,31 31,27 V6" fill="url(#gg)" stroke="#6a6a6a"/><ellipse cx="17" cy="6" rx="14" ry="4.5" fill="#cfcfcf" stroke="#6a6a6a"/><ellipse cx="17" cy="6" rx="7" ry="2.2" fill="#9a9a9a" stroke="#6a6a6a"/><path d="M31,6 V27" stroke="#555" stroke-width="1.6"/><circle cx="3" cy="6" r="2.8" fill="#8a8a8a" stroke="#555" stroke-width="0.9"/><circle cx="10" cy="6" r="2.8" fill="#8a8a8a" stroke="#555" stroke-width="0.9"/><circle cx="17" cy="6" r="2.8" fill="#8a8a8a" stroke="#555" stroke-width="0.9"/><circle cx="24" cy="6" r="2.8" fill="#8a8a8a" stroke="#555" stroke-width="0.9"/><circle cx="31" cy="6" r="2.8" fill="#8a8a8a" stroke="#555" stroke-width="0.9"/><circle cx="31" cy="27" r="2.8" fill="#8a8a8a" stroke="#555" stroke-width="0.9"/></svg>
<svg style="left:1122px;top:143px" width="34" height="34" viewBox="0 0 34 34"><path d="M8,1 L14,13 H2 Z" fill="url(#gg)" stroke="#6a6a6a"/><path d="M16,6 H30" stroke="#6a6a6a" stroke-width="3"/><path d="M16,6 H30" stroke="#e0e0e0" stroke-width="1.4"/><path d="M8,15 L20,12 L32,15 V27 L20,31 L8,27 Z" fill="url(#gg)" stroke="#6a6a6a"/><circle cx="9" cy="25" r="8" fill="#dedede" stroke="#6a6a6a"/><path d="M9,25 m-4,0 a4,4 0 1 1 4,4 a2,2 0 1 1 -2,-3" fill="none" stroke="#6a6a6a" stroke-width="1.4"/><circle cx="25" cy="25" r="8" fill="#dedede" stroke="#6a6a6a"/><circle cx="25" cy="25" r="4.5" fill="none" stroke="#6a6a6a" stroke-width="1.4"/></svg>
<svg style="left:1167px;top:143px" width="36" height="34" viewBox="0 0 36 34"><path d="M1,19 L8,16 L15,19 V30 L8,33 L1,30 Z" fill="url(#gg)" stroke="#6a6a6a"/><path d="M1,19 L8,22 L15,19 M8,22 V33" fill="none" stroke="#6a6a6a"/><path d="M4,8 H9 M6.5,5.5 V10.5" stroke="#6a6a6a" stroke-width="2.6"/><path d="M4,8 H9 M6.5,5.5 V10.5" stroke="#f0f0f0" stroke-width="1"/><path d="M11,6 L16,1 L19,6 L16,5 L13,9Z" fill="#8a8a8a" stroke="#555" stroke-width="0.8"/><path d="M22,1 H33" stroke="#6a6a6a" stroke-width="2.4"/><path d="M27.5,3 V10 M24,7 L27.5,11 L31,7" fill="#8a8a8a" stroke="#6a6a6a" stroke-width="2.2"/><rect x="23" y="14" width="10" height="10" fill="#f0f0f0" stroke="#6a6a6a" stroke-width="1.4"/><rect x="26" y="17" width="4" height="4" fill="#fafafa" stroke="#6a6a6a" stroke-width="1"/><path d="M18,31 L24,25 L24,30 L29,29 L21,34Z" fill="#8a8a8a" stroke="#555" stroke-width="0.8"/></svg>
<svg style="left:5px;top:190px" width="3" height="39" viewBox="0 0 3 39"><rect x="0.8" y="0.3" width="2" height="2" rx="0.8" fill="#a6a6a6"/><rect x="0" y="2.3" width="1.6" height="1" fill="#ffffff"/><rect x="0.8" y="4.3" width="2" height="2" rx="0.8" fill="#a6a6a6"/><rect x="0" y="6.3" width="1.6" height="1" fill="#ffffff"/><rect x="0.8" y="8.3" width="2" height="2" rx="0.8" fill="#a6a6a6"/><rect x="0" y="10.3" width="1.6" height="1" fill="#ffffff"/><rect x="0.8" y="12.3" width="2" height="2" rx="0.8" fill="#a6a6a6"/><rect x="0" y="14.3" width="1.6" height="1" fill="#ffffff"/><rect x="0.8" y="16.3" width="2" height="2" rx="0.8" fill="#a6a6a6"/><rect x="0" y="18.3" width="1.6" height="1" fill="#ffffff"/><rect x="0.8" y="20.3" width="2" height="2" rx="0.8" fill="#a6a6a6"/><rect x="0" y="22.3" width="1.6" height="1" fill="#ffffff"/><rect x="0.8" y="24.3" width="2" height="2" rx="0.8" fill="#a6a6a6"/><rect x="0" y="26.3" width="1.6" height="1" fill="#ffffff"/><rect x="0.8" y="28.3" width="2" height="2" rx="0.8" fill="#a6a6a6"/><rect x="0" y="30.3" width="1.6" height="1" fill="#ffffff"/><rect x="0.8" y="32.3" width="2" height="2" rx="0.8" fill="#a6a6a6"/><rect x="0" y="34.3" width="1.6" height="1" fill="#ffffff"/></svg>
<svg style="left:22px;top:197px" width="33" height="27" viewBox="0 0 33 27"><path d="M4,1 H1 V26 H4 M29,1 H32 V26 H29" fill="none" stroke="#6a6a6a" stroke-width="1.6"/><path d="M4,6 L15,3 L28,6 V22 L18,26 L4,23 Z" fill="url(#gg)" stroke="#6a6a6a"/><path d="M4,6 L18,9 L28,6 M18,9 V26" fill="none" stroke="#6a6a6a"/></svg>
<svg style="left:65px;top:208px" width="11" height="5.800000000000011" viewBox="0 0 11 5.800000000000011"><polygon points="0,0 11,0 5.5,5.800000000000011" fill="#6e6e6e"/></svg>
<svg style="left:85px;top:196px" width="33" height="31" viewBox="0 0 33 31"><circle cx="22" cy="11" r="10.4" fill="url(#gs)" stroke="#6a6a6a"/><circle cx="11" cy="20" r="10.4" fill="url(#gs)" stroke="#6a6a6a"/><circle cx="11" cy="20" r="8.5" fill="none" stroke="#9a9a9a" stroke-width="0.8"/></svg>
<svg style="left:132px;top:196px" width="33" height="31" viewBox="0 0 33 31"><circle cx="11" cy="20" r="10.4" fill="url(#gs)" stroke="#6a6a6a"/><circle cx="22" cy="11" r="10.4" fill="url(#gsw)" stroke="#6a6a6a"/></svg>
<svg style="left:178px;top:196px" width="33" height="31" viewBox="0 0 33 31"><circle cx="22" cy="11" r="10.4" fill="#a8a8a8" stroke="#6a6a6a"/><circle cx="11" cy="20" r="10.4" fill="#a0a0a0" stroke="#6a6a6a"/><circle cx="22" cy="11" r="9.9" fill="url(#gs)"/><circle cx="11" cy="20" r="9.9" fill="url(#gs)"/><path d="M13,10.5 Q17,15 19.5,19.5" stroke="#8a8a8a" stroke-width="1" fill="none"/></svg>
<svg style="left:225px;top:196px" width="33" height="31" viewBox="0 0 33 31"><circle cx="11" cy="20" r="10.4" fill="url(#gsw)" stroke="#6a6a6a"/><circle cx="22" cy="11" r="10.4" fill="url(#gsw)" fill-opacity="0.6" stroke="#6a6a6a"/><path d="M13,10 A10.4,10.4 0 0 1 20,21 A10.4,10.4 0 0 1 13,10 Z" fill="#8e8e8e" stroke="#6a6a6a"/></svg>
<svg style="left:271px;top:194px" width="35" height="34" viewBox="0 0 35 34"><rect x="1" y="1" width="15" height="32" fill="url(#gg2)" stroke="#6a6a6a"/><rect x="8" y="11" width="26" height="14" fill="url(#gg)" stroke="#6a6a6a"/><rect x="3.5" y="3" width="4" height="28" fill="#a8a8a8"/><rect x="10" y="13.5" width="22" height="9" fill="#b8b8b8"/></svg>
<svg style="left:315px;top:207.75px" width="11" height="6.25" viewBox="0 0 11 6.25"><polygon points="0,0 11,0 5.5,6.25" fill="#6e6e6e"/></svg>
<svg style="left:336px;top:195px" width="35" height="32" viewBox="0 0 35 32"><circle cx="10" cy="21.5" r="9.8" fill="url(#gs)" stroke="#6a6a6a"/><circle cx="23.8" cy="10" r="9.8" fill="url(#gs)" stroke="#6a6a6a"/><path d="M14.08,12.37 A10,10 0 0 1 19.7,19.13 A10,10 0 0 1 14.08,12.37 Z" fill="#a8a8a8" stroke="#f4f4f4" stroke-width="1.8"/><path d="M14.08,12.37 A10,10 0 0 1 19.7,19.13 A10,10 0 0 1 14.08,12.37 Z" fill="none" stroke="#6a6a6a" stroke-width="0.8"/></svg>
<svg style="left:379.75px;top:207.75px" width="11.25" height="6.25" viewBox="0 0 11.25 6.25"><polygon points="0,0 11.25,0 5.625,6.25" fill="#6e6e6e"/></svg>
<svg style="left:404px;top:194px" width="26" height="34" viewBox="0 0 26 34"><path d="M11,5 L23,29 C23,34 1,34 1,29 Z" fill="url(#gg)" stroke="#6a6a6a"/><path d="M15,12 L22,19" stroke="#6a6a6a" stroke-width="3.6"/><path d="M15,12 L22,19" stroke="#cfcfcf" stroke-width="1.8"/><circle cx="11" cy="7.5" r="7" fill="#f2f2f2" fill-opacity="0.85" stroke="#6a6a6a" stroke-width="1.2"/><path d="M11,2 L14,9 H8 Z" fill="#b8b8b8"/></svg>
<svg style="left:447px;top:196px" width="34" height="31" viewBox="0 0 34 31"><path d="M1,6 L12,1 L33,5 V24 L22,30 L1,26 Z" fill="url(#gg)" stroke="#8a8a8a"/><path d="M1,6 L22,10 L33,5 M22,10 V30" fill="none" stroke="#9a9a9a"/><path d="M24,28 C31,22 27,10 18,12 L18,8 L7,15 L18,21 L18,17 C23,16 25,22 21,26 Z" fill="#8a8a8a" stroke="#6a6a6a"/></svg>
<svg style="left:496px;top:190px" width="3" height="39" viewBox="0 0 3 39"><rect x="0.8" y="0.3" width="2" height="2" rx="0.8" fill="#a6a6a6"/><rect x="0" y="2.3" width="1.6" height="1" fill="#ffffff"/><rect x="0.8" y="4.3" width="2" height="2" rx="0.8" fill="#a6a6a6"/><rect x="0" y="6.3" width="1.6" height="1" fill="#ffffff"/><rect x="0.8" y="8.3" width="2" height="2" rx="0.8" fill="#a6a6a6"/><rect x="0" y="10.3" width="1.6" height="1" fill="#ffffff"/><rect x="0.8" y="12.3" width="2" height="2" rx="0.8" fill="#a6a6a6"/><rect x="0" y="14.3" width="1.6" height="1" fill="#ffffff"/><rect x="0.8" y="16.3" width="2" height="2" rx="0.8" fill="#a6a6a6"/><rect x="0" y="18.3" width="1.6" height="1" fill="#ffffff"/><rect x="0.8" y="20.3" width="2" height="2" rx="0.8" fill="#a6a6a6"/><rect x="0" y="22.3" width="1.6" height="1" fill="#ffffff"/><rect x="0.8" y="24.3" width="2" height="2" rx="0.8" fill="#a6a6a6"/><rect x="0" y="26.3" width="1.6" height="1" fill="#ffffff"/><rect x="0.8" y="28.3" width="2" height="2" rx="0.8" fill="#a6a6a6"/><rect x="0" y="30.3" width="1.6" height="1" fill="#ffffff"/><rect x="0.8" y="32.3" width="2" height="2" rx="0.8" fill="#a6a6a6"/><rect x="0" y="34.3" width="1.6" height="1" fill="#ffffff"/></svg>
<svg style="left:513px;top:193px" width="30" height="35" viewBox="0 0 30 35"><path d="M0.5,0.5 H29 V28 L23,34.5 H0.5 Z" fill="url(#gl)" stroke="#8c8c8c"/><path d="M23,34.5 V28 H29" fill="#d8d8d8" stroke="#8c8c8c"/><rect x="3.5" y="15" width="14" height="14" fill="none" stroke="#8a8a8a" stroke-width="2"/><circle cx="19" cy="13" r="8" fill="none" stroke="#8a8a8a" stroke-width="2"/></svg>
<svg style="left:559px;top:194px" width="32" height="34" viewBox="0 0 32 34"><path d="M1,21 L14,16 L31,19 V27 L18,33 L1,30 Z" fill="url(#gg)" stroke="#6a6a6a"/><path d="M1,21 L18,25 L31,19 M18,25 V33" fill="none" stroke="#6a6a6a"/><path d="M15,22 V13 H10 L15.5,0.8 L21,13 H16" fill="url(#gg)" stroke="#6a6a6a"/><path d="M13,22 V13 H9 L15.5,1 L22,13 H18 V22 Z" fill="url(#gg)" stroke="#6a6a6a"/></svg>
<svg style="left:604px;top:194px" width="34" height="34" viewBox="0 0 34 34"><path d="M17,1 A16,16 0 1 0 29,27 L22,21 A8,8 0 1 1 17,9 Z" fill="url(#gg)" stroke="#6a6a6a"/><path d="M4,26 L12,21" stroke="#6a6a6a"/><circle cx="17" cy="17" r="2.4" fill="#8a8a8a" stroke="#6a6a6a" stroke-width="0.6"/><path d="M23,4 L32,6 L29,9 C34,15 33,22 28,26 L25,23 C28,19 28,14 26,11 L23,14 Z" fill="url(#gg)" stroke="#6a6a6a"/></svg>
<svg style="left:651px;top:194px" width="34" height="34" viewBox="0 0 34 34"><path d="M1,8 L13,3 V26 L1,31 Z" fill="url(#gg2)" stroke="#6a6a6a"/><path d="M33,8 L21,3 V26 L33,31 Z" fill="url(#gg)" stroke="#6a6a6a"/><rect x="15.5" y="0.5" width="3" height="6" rx="1.5" fill="#8a8a8a" stroke="#6a6a6a" stroke-width="0.8"/><rect x="15.5" y="13" width="3" height="7" rx="1.5" fill="#8a8a8a" stroke="#6a6a6a" stroke-width="0.8"/><rect x="15.5" y="26.5" width="3" height="7" rx="1.5" fill="#8a8a8a" stroke="#6a6a6a" stroke-width="0.8"/></svg>
<svg style="left:697px;top:193px" width="34" height="35" viewBox="0 0 34 35"><path d="M1,1 H6 V4 H4 V8 H1 Z M9,1 H13 V4 H9Z M15.5,1 H19.5 V4 H15.5Z M22,1 H26 V4 H22Z M28,1 H33 V8 H30 V4 H28Z M30,11 H33 V15 H30Z M30,18 H33 V22 H30Z M30,25 H33 V29 H30Z M22,31 H28 V34 H22Z M30,31 H33 V34 H30Z M1,11 H4 V15 H1Z" fill="#9a9a9a" stroke="#7a7a7a" stroke-width="0.8"/><rect x="1" y="17" width="15" height="17" rx="1.5" fill="url(#gg)" stroke="#6a6a6a"/><rect x="5" y="21" width="7" height="9" fill="#f0f0f0" stroke="#6a6a6a"/><path d="M15,17 L24,8 M19,7 H26 V14 Z" stroke="#6a6a6a" stroke-width="2.6" fill="#9a9a9a"/></svg>
<svg style="left:744px;top:194px" width="34" height="34" viewBox="0 0 34 34"><path d="M1,27 C1,14 8,5 19,2 L33,5 C25,8 18,14 17,26 V33 L1,30 Z" fill="url(#gg)" stroke="#6a6a6a"/><path d="M17,26 L1,23 M19,2 L33,5" fill="none" stroke="#6a6a6a"/><path d="M2,25 L16,28" stroke="#6a6a6a" stroke-width="2.2"/></svg>
<svg style="left:790px;top:194px" width="34" height="34" viewBox="0 0 34 34"><path d="M1,24 L17,4 L33,7 L17,27 V33 L1,30 Z" fill="url(#gg)" stroke="#6a6a6a"/><path d="M1,24 L17,27 M17,4 L33,7" fill="none" stroke="#6a6a6a"/><path d="M2,27 L16,30" stroke="#6a6a6a" stroke-width="2.2"/></svg>
<svg style="left:837px;top:194px" width="34" height="34" viewBox="0 0 34 34"><rect x="1" y="1" width="24" height="23" fill="none" stroke="#6a6a6a" stroke-width="1.4"/><rect x="3" y="3" width="20" height="19" fill="none" stroke="#b0b0b0" stroke-width="1.4"/><rect x="10" y="10" width="23" height="23" rx="1.5" fill="url(#gg)" stroke="#6a6a6a"/></svg>
<svg style="left:883px;top:194px" width="34" height="34" viewBox="0 0 34 34"><path d="M1,8 L33,1 V26 L1,33 Z" fill="url(#gg)" stroke="#6a6a6a"/><path d="M1,8 V33" stroke="#6a6a6a" stroke-width="3"/><path d="M33,1 V26" stroke="#6a6a6a" stroke-width="3"/></svg>
<svg style="left:932px;top:197px" width="30" height="29" viewBox="0 0 30 29"><path d="M1,10 L9,3 L29,3 V28 L9,26 L1,24 Z" fill="url(#gg)" stroke="#6a6a6a"/><path d="M1,10 L9,13 L29,3 M9,13 V26" fill="none" stroke="#6a6a6a"/><rect x="3" y="15" width="4" height="7" fill="#7a7a7a"/></svg>
<svg style="left:976px;top:194px" width="34" height="34" viewBox="0 0 34 34"><path d="M1,19 L8,4 L14,5 C14,12 19,18 27,20 L33,14 L33,26 L22,33 L1,28 Z" fill="url(#gg)" stroke="#6a6a6a"/><circle cx="27.5" cy="3.5" r="2.5" fill="#7a7a7a"/><rect x="3" y="21" width="6" height="4" fill="#8a8a8a" stroke="#6a6a6a" stroke-width="0.8"/><path d="M8,4 L8,28 M14,5 L22,30" fill="none" stroke="#6a6a6a" stroke-width="0.8"/></svg>
<svg style="left:1025px;top:195px" width="30" height="33" viewBox="0 0 30 33"><path d="M1,1 L22,4 V32 L1,29 Z" fill="url(#gg)" stroke="#6a6a6a"/><path d="M22,4 L29,6 V30 L22,32" fill="#9a9a9a" stroke="#6a6a6a"/><rect x="6" y="8" width="12" height="17" fill="none" stroke="#6a6a6a" stroke-width="2"/><path d="M9,11 H18 V25" fill="none" stroke="#444" stroke-width="1"/></svg>
<svg style="left:1069px;top:193px" width="34" height="35" viewBox="0 0 34 35"><path d="M8,3 L17,0.8 L26,3 V30 L17,34 L8,31 Z" fill="url(#gg)" stroke="#6a6a6a"/><path d="M1,11 L10,7 H24 L33,11 L24,15 H10 Z" fill="#b4b4b4" fill-opacity="0.85" stroke="#6a6a6a"/><path d="M1,22 L10,18 H24 L33,22 L24,26 H10 Z" fill="#b4b4b4" fill-opacity="0.85" stroke="#6a6a6a"/><path d="M8,3 L17,6 L26,3 M17,6 V34" fill="none" stroke="#6a6a6a"/></svg>
<svg style="left:1117px;top:193px" width="31" height="35" viewBox="0 0 31 35"><path d="M6,14 V8 H2 L10,1 L18,8 H14 V14 Z" fill="url(#gg)" stroke="#6a6a6a" transform="translate(5,0)"/><path d="M1,21 L9,16 H30 L22,21 Z" fill="#b8b8b8" stroke="#6a6a6a"/><path d="M1,33 L9,28 H30 L22,33 Z" fill="#b8b8b8" stroke="#6a6a6a"/></svg>
<svg style="left:1159.6px;top:207.5px" width="11.400000000000091" height="6.25" viewBox="0 0 11.400000000000091 6.25"><polygon points="0,0 11.400000000000091,0 5.7000000000000455,6.25" fill="#6e6e6e"/></svg>
<svg style="left:1180px;top:193px" width="34" height="35" viewBox="0 0 34 35"><path d="M1,6 L16,1 L33,6 V26 L18,34 L1,29 Z" fill="url(#gg)" stroke="#6a6a6a"/><path d="M1,6 L18,11 L33,6 M18,11 V34" fill="none" stroke="#6a6a6a"/><path d="M6,9 L16,11.5 V27 L6,24 Z M20,11.5 L29,9 V24 L20,28Z" fill="#d0d0d0" stroke="#6a6a6a"/></svg>
<svg style="left:1228px;top:194px" width="32" height="32" viewBox="0 0 32 32"><path d="M1,4 L10,1 L31,4 V26 L22,31 L1,28 Z" fill="url(#gg)" stroke="#6a6a6a"/><path d="M5,8 H23 V14 H14 V18 H20 V22 H14 V28" fill="none" stroke="#6a6a6a" stroke-width="3.2"/><path d="M5,8 H23 V14 H14 V18 H20 V22 H14 V28" fill="none" stroke="#c8c8c8" stroke-width="1.6"/></svg>
<svg style="left:1273px;top:196px" width="34" height="30" viewBox="0 0 34 30"><path d="M1,5 L14,1 L33,4 V24 L20,29 L1,26 Z" fill="url(#gg)" stroke="#6a6a6a"/><path d="M1,5 L20,9 L33,4 M20,9 V29" fill="none" stroke="#6a6a6a"/></svg>
<div class="ab" style="left:4px;top:240px;width:73px;height:31px;background:#f0f0f0;border:1px solid #e6e6e6;border-bottom:none;border-radius:5px 5px 0 0"></div>
<div class="ab" style="left:82px;top:240px;width:103px;height:31px;background:#fafafa;border:1px solid #e6e6e6;border-bottom:none;border-radius:5px 5px 0 0"></div>
<div class="ab" style="left:0px;top:270px;width:655px;height:2px;background:#cfcfcf"></div>
<div class="t" style="left:17.90px;top:248px;font-size:17px;transform:scaleX(0.8500);"><span style="letter-spacing:-1.118px">モデル</span></div>
<div class="t" style="left:125.29px;top:247px;font-size:17px;transform:scaleX(0.8565);"><span style="letter-spacing:0.000px">タスク</span></div>
<div class="t" style="left:280.98px;top:278px;font-size:17px;transform:scaleX(0.8609);"><span style="letter-spacing:0.000px">タスク</span></div>
<div class="ab" style="left:8px;top:301px;width:622px;height:36px;background:#00457f"></div>
<div class="t" style="left:243.40px;top:310px;font-size:17px;transform:scaleX(0.8500);font-weight:bold;color:#0d0d0d">幾何<span style="letter-spacing:-1.376px">プリミティブ</span></div>
<div class="ab" style="left:8px;top:337px;width:622px;height:437px;background:#fff"></div>
<div class="ab" style="left:8px;top:786px;width:622px;height:39px;background:#00457f"></div>
<div class="ab" style="left:8px;top:825px;width:622px;height:87px;background:#fff"></div>
<div class="ab" style="left:636px;top:302px;width:17px;height:608px;background:#fafafa;border-radius:6px"></div>
<div class="ab" style="left:644px;top:364px;width:2px;height:300px;background:#8a8a8a"></div>
<div class="ab" style="left:32px;top:361px;width:574px;height:32.5px;background:#f5f5f5;border:1px solid #e6e6e6;border-bottom-color:#dedede;border-radius:6px"></div>
<div class="t" style="left:68.00px;top:370px;font-size:17px;transform:scaleX(1.0606);">渦巻</div>
<div class="ab" style="left:31px;top:396px;width:577px;height:481px;background:#fff;border:1px solid #e9e9e9;border-radius:6px 6px 0 0"></div>
<div class="ab" style="left:606px;top:401px;width:2px;height:476px;background:#6b6b6b;border-radius:1px 1px 0 0"></div>
<div class="ab" style="left:31px;top:875.5px;width:577px;height:2px;background:#6b6b6b"></div>
<div class="ab" style="left:32px;top:877px;width:2px;height:35px;background:#5a5a5a"></div>
<div class="ab" style="left:605px;top:877px;width:2px;height:35px;background:#5a5a5a"></div>
<div class="t" style="left:68.00px;top:405px;font-size:17px;transform:scaleX(1.0000);">平面</div>
<div class="t" style="left:68.00px;top:435px;font-size:17px;transform:scaleX(1.0392);">立方体</div>
<div class="t" style="left:66.97px;top:465px;font-size:17px;transform:scaleX(1.0303);">円柱</div>
<div class="t" style="left:66.97px;top:495px;font-size:17px;transform:scaleX(1.0303);">円錐</div>
<div class="t" style="left:68.00px;top:525px;font-size:17px;transform:scaleX(1.0000);">球体</div>
<div class="t" style="left:68.00px;top:555px;font-size:17px;transform:scaleX(1.0392);">楕円体</div>
<div class="t" style="left:62.90px;top:585px;font-size:17px;transform:scaleX(0.8500);"><span style="letter-spacing:-0.980px">トーラス</span></div>
<div class="t" style="left:66.94px;top:615px;font-size:17px;transform:scaleX(1.0600);">多角柱</div>
<div class="t" style="left:68.00px;top:645px;font-size:17px;transform:scaleX(1.0303);">楔形</div>
<div class="t" style="left:68.00px;top:675px;font-size:17px;transform:scaleX(1.0303);">螺旋</div>
<div class="ab" style="left:35px;top:699px;width:567px;height:25px;background:#f3f3f3;border-radius:5px"></div>
<div class="ab" style="left:32px;top:699px;width:3px;height:25px;background:#2a73c6;border-radius:2px"></div>
<div class="t" style="left:68.00px;top:705px;font-size:17px;transform:scaleX(1.0606);">渦巻</div>
<div class="t" style="left:66.79px;top:735px;font-size:17px;transform:scaleX(1.2143);">円</div>
<div class="t" style="left:68.00px;top:765px;font-size:17px;transform:scaleX(1.0625);">楕円</div>
<div class="t" style="left:66.87px;top:795px;font-size:17px;transform:scaleX(1.1333);">点</div>
<div class="t" style="left:68.00px;top:825px;font-size:17px;transform:scaleX(1.0303);">直線</div>
<div class="t" style="left:68.00px;top:855px;font-size:17px;transform:scaleX(1.0597);">正多角形</div>
<div class="ab" style="left:327px;top:891px;width:260px;height:21px;background:#fafafa;border:1px solid #e5e5e5;border-bottom:none;border-radius:5px 5px 0 0"></div>
<div class="ab" style="left:0;top:0;width:1920px;height:912px;overflow:hidden">
<div class="t" style="left:48.00px;top:902px;font-size:17.5px;">X</div>
<div class="t" style="left:338.00px;top:902px;font-size:17.5px;">70.000 mm</div>
</div>
<div class="ab" style="left:662px;top:237px;width:1258px;height:640px;background:linear-gradient(#333366,#9797ab)"></div>
<div class="ab" style="left:662px;top:237px;width:1258px;height:1px;background:#1c1c9a"></div>
<svg style="left:0;top:0" width="1920" height="1080" viewBox="0 0 1920 1080"><polygon points="696.4,585.9 818.1,566.9 856.8,626.5 735.6,644.8" fill="#b1b1c5" stroke="#111" stroke-width="2" stroke-linejoin="round"/><defs><radialGradient id="eg" cx="0.38" cy="0.52" r="0.66" fx="0.36" fy="0.5"><stop offset="0" stop-color="#cdcde0"/><stop offset="0.5" stop-color="#bdbdd0"/><stop offset="0.8" stop-color="#a2a2b3"/><stop offset="1" stop-color="#8a8a9a"/></radialGradient><linearGradient id="eo" x1="0.25" y1="0.2" x2="0.85" y2="1"><stop offset="0" stop-color="#2a2a40" stop-opacity="0"/><stop offset="0.6" stop-color="#2a2a40" stop-opacity="0.05"/><stop offset="1" stop-color="#2a2a40" stop-opacity="0.45"/></linearGradient><radialGradient id="eh" cx="0.5" cy="0.5" r="0.5"><stop offset="0" stop-color="#f4f4fb" stop-opacity="0.95"/><stop offset="1" stop-color="#f4f4fb" stop-opacity="0"/></radialGradient></defs><ellipse cx="977.6" cy="607.2" rx="50.6" ry="33" fill="url(#eg)"/><ellipse cx="977.6" cy="607.2" rx="50.6" ry="33" fill="url(#eo)"/><ellipse cx="957" cy="622.5" rx="11" ry="3.2" transform="rotate(14 957 622.5)" fill="url(#eh)"/><ellipse cx="1012" cy="612" rx="8" ry="3.2" transform="rotate(-35 1012 612)" fill="url(#eh)"/><path d="M976.2,584.6 Q998,582 1012,588 Q1022,592 1026.3,599.2" fill="none" stroke="#111" stroke-width="1.6"/><g transform="translate(1060 455) scale(0.14368)" stroke="#111" stroke-width="14" stroke-linejoin="round"><polygon points="95,185 228,242 228,1010 95,955" fill="#b4b4c8"/><polygon points="228,242 400,212 400,985 228,1010" fill="#7d808e"/><polygon points="400,212 432,130 432,925 400,985" fill="#9da0b4"/><polygon points="95,185 130,95 300,72 432,130 400,212 228,242" fill="#b6b6ca"/></g><g transform="translate(1195 395) scale(0.17126)" stroke="#111" stroke-width="13" stroke-linejoin="round"><polygon points="52,132 138,372 138,1020 52,525" fill="#a2a2b8"/><polygon points="138,372 848,262 848,910 138,1020" fill="#7c808e"/><polygon points="52,132 480,68 848,262 138,372" fill="#9e9eb0"/></g><polyline points="1473.3,418 1473.00,421.50 1472.95,422.18 1472.81,422.85 1472.57,423.51 1472.25,424.17 1471.83,424.80 1471.33,425.42 1470.74,426.02 1470.08,426.58 1469.34,427.12 1468.53,427.63 1467.67,428.10 1466.75,428.54 1465.78,428.93 1464.78,429.29 1463.74,429.60 1462.67,429.86 1461.59,430.09 1460.50,430.26 1459.41,430.39 1458.33,430.48 1457.26,430.52 1456.22,430.51 1455.22,430.47 1454.25,430.38 1453.33,430.25 1452.47,430.09 1451.66,429.89 1450.92,429.65 1450.26,429.39 1449.67,429.10 1449.17,428.79 1448.75,428.46 1448.43,428.12 1448.19,427.76 1448.05,427.39 1448.00,427.02 1448.05,426.66 1448.19,426.29 1448.43,425.93 1448.75,425.59 1449.17,425.26 1449.67,424.95 1450.26,424.66 1450.92,424.40 1451.66,424.16 1452.47,423.96 1453.33,423.80 1454.25,423.67 1455.22,423.58 1456.22,423.54 1457.26,423.53 1458.33,423.57 1459.41,423.66 1460.50,423.79 1461.59,423.96 1462.67,424.19 1463.74,424.45 1464.78,424.76 1465.78,425.12 1466.75,425.51 1467.67,425.95 1468.53,426.42 1469.34,426.93 1470.08,427.47 1470.74,428.03 1471.33,428.63 1471.83,429.25 1472.25,429.88 1472.57,430.54 1472.81,431.20 1472.95,431.87 1473.00,432.55 1472.95,433.23 1472.81,433.90 1472.57,434.56 1472.25,435.22 1471.83,435.85 1471.33,436.47 1470.74,437.07 1470.08,437.63 1469.34,438.17 1468.53,438.68 1467.67,439.15 1466.75,439.59 1465.78,439.98 1464.78,440.34 1463.74,440.65 1462.67,440.91 1461.59,441.14 1460.50,441.31 1459.41,441.44 1458.33,441.53 1457.26,441.57 1456.22,441.56 1455.22,441.52 1454.25,441.43 1453.33,441.30 1452.47,441.14 1451.66,440.94 1450.92,440.70 1450.26,440.44 1449.67,440.15 1449.17,439.84 1448.75,439.51 1448.43,439.17 1448.19,438.81 1448.05,438.44 1448.00,438.07 1448.05,437.71 1448.19,437.34 1448.43,436.98 1448.75,436.64 1449.17,436.31 1449.67,436.00 1450.26,435.71 1450.92,435.45 1451.66,435.21 1452.47,435.01 1453.33,434.85 1454.25,434.72 1455.22,434.63 1456.22,434.59 1457.26,434.58 1458.33,434.62 1459.41,434.71 1460.50,434.84 1461.59,435.01 1462.67,435.24 1463.74,435.50 1464.78,435.81 1465.78,436.17 1466.75,436.56 1467.67,437.00 1468.53,437.47 1469.34,437.98 1470.08,438.52 1470.74,439.08 1471.33,439.68 1471.83,440.30 1472.25,440.93 1472.57,441.59 1472.81,442.25 1472.95,442.92 1473.00,443.60 1472.95,444.28 1472.81,444.95 1472.57,445.61 1472.25,446.27 1471.83,446.90 1471.33,447.52 1470.74,448.12 1470.08,448.68 1469.34,449.22 1468.53,449.73 1467.67,450.20 1466.75,450.64 1465.78,451.03 1464.78,451.39 1463.74,451.70 1462.67,451.96 1461.59,452.19 1460.50,452.36 1459.41,452.49 1458.33,452.58 1457.26,452.62 1456.22,452.61 1455.22,452.57 1454.25,452.48 1453.33,452.35 1452.47,452.19 1451.66,451.99 1450.92,451.75 1450.26,451.49 1449.67,451.20 1449.17,450.89 1448.75,450.56 1448.43,450.22 1448.19,449.86 1448.05,449.49 1448.00,449.12 1448.05,448.76 1448.19,448.39 1448.43,448.03 1448.75,447.69 1449.17,447.36 1449.67,447.05 1450.26,446.76 1450.92,446.50 1451.66,446.26 1452.47,446.06 1453.33,445.90 1454.25,445.77 1455.22,445.68 1456.22,445.64 1457.26,445.63 1458.33,445.67 1459.41,445.76 1460.50,445.89 1461.59,446.06 1462.67,446.29 1463.74,446.55 1464.78,446.86 1465.78,447.22 1466.75,447.61 1467.67,448.05 1468.53,448.52 1469.34,449.03 1470.08,449.57 1470.74,450.13 1471.33,450.73 1471.83,451.35 1472.25,451.98 1472.57,452.64 1472.81,453.30 1472.95,453.97 1473.00,454.65 1472.95,455.33 1472.81,456.00 1472.57,456.66 1472.25,457.32 1471.83,457.95 1471.33,458.57 1470.74,459.17 1470.08,459.73 1469.34,460.27 1468.53,460.78 1467.67,461.25 1466.75,461.69 1465.78,462.08 1464.78,462.44 1463.74,462.75 1462.67,463.01 1461.59,463.24 1460.50,463.41 1459.41,463.54 1458.33,463.63 1457.26,463.67 1456.22,463.66 1455.22,463.62 1454.25,463.53 1453.33,463.40 1452.47,463.24 1451.66,463.04 1450.92,462.80 1450.26,462.54 1449.67,462.25 1449.17,461.94 1448.75,461.61 1448.43,461.27 1448.19,460.91 1448.05,460.54 1448.00,460.18 1448.05,459.81 1448.19,459.44 1448.43,459.08 1448.75,458.74 1449.17,458.41 1449.67,458.10 1450.26,457.81 1450.92,457.55 1451.66,457.31 1452.47,457.11 1453.33,456.95 1454.25,456.82 1455.22,456.73 1456.22,456.69 1457.26,456.68 1458.33,456.72 1459.41,456.81 1460.50,456.94 1461.59,457.11 1462.67,457.34 1463.74,457.60 1464.78,457.91 1465.78,458.27 1466.75,458.66 1467.67,459.10 1468.53,459.57 1469.34,460.08 1470.08,460.62 1470.74,461.18 1471.33,461.78 1471.83,462.40 1472.25,463.03 1472.57,463.69 1472.81,464.35 1472.95,465.02 1473.00,465.70 1472.95,466.38 1472.81,467.05 1472.57,467.71 1472.25,468.37 1471.83,469.00 1471.33,469.62 1470.74,470.22 1470.08,470.78 1469.34,471.32 1468.53,471.83 1467.67,472.30 1466.75,472.74 1465.78,473.13 1464.78,473.49 1463.74,473.80 1462.67,474.06 1461.59,474.29 1460.50,474.46 1459.41,474.59 1458.33,474.68 1457.26,474.72 1456.22,474.71 1455.22,474.67 1454.25,474.58 1453.33,474.45 1452.47,474.29 1451.66,474.09 1450.92,473.85 1450.26,473.59 1449.67,473.30 1449.17,472.99 1448.75,472.66 1448.43,472.32 1448.19,471.96 1448.05,471.59 1448.00,471.23 1448.05,470.86 1448.19,470.49 1448.43,470.13 1448.75,469.79 1449.17,469.46 1449.67,469.15 1450.26,468.86 1450.92,468.60 1451.66,468.36 1452.47,468.16 1453.33,468.00 1454.25,467.87 1455.22,467.78 1456.22,467.74 1457.26,467.73 1458.33,467.77 1459.41,467.86 1460.50,467.99 1461.59,468.16 1462.67,468.39 1463.74,468.65 1464.78,468.96 1465.78,469.32 1466.75,469.71 1467.67,470.15 1468.53,470.62 1469.34,471.13 1470.08,471.67 1470.74,472.23 1471.33,472.83 1471.83,473.45 1472.25,474.08 1472.57,474.74 1472.81,475.40 1472.95,476.07 1473.00,476.75 1472.95,477.43 1472.81,478.10 1472.57,478.76 1472.25,479.42 1471.83,480.05 1471.33,480.67 1470.74,481.27 1470.08,481.83 1469.34,482.37 1468.53,482.88 1467.67,483.35 1466.75,483.79 1465.78,484.18 1464.78,484.54 1463.74,484.85 1462.67,485.11 1461.59,485.34 1460.50,485.51 1459.41,485.64 1458.33,485.73 1457.26,485.77 1456.22,485.76 1455.22,485.72 1454.25,485.63 1453.33,485.50 1452.47,485.34 1451.66,485.14 1450.92,484.90 1450.26,484.64 1449.67,484.35 1449.17,484.04 1448.75,483.71 1448.43,483.37 1448.19,483.01 1448.05,482.64 1448.00,482.28 1448.05,481.91 1448.19,481.54 1448.43,481.18 1448.75,480.84 1449.17,480.51 1449.67,480.20 1450.26,479.91 1450.92,479.65 1451.66,479.41 1452.47,479.21 1453.33,479.05 1454.25,478.92 1455.22,478.83 1456.22,478.79 1457.26,478.78 1458.33,478.82 1459.41,478.91 1460.50,479.04 1461.59,479.21 1462.67,479.44 1463.74,479.70 1464.78,480.01 1465.78,480.37 1466.75,480.76 1467.67,481.20 1468.53,481.67 1469.34,482.18 1470.08,482.72 1470.74,483.28 1471.33,483.88 1471.83,484.50 1472.25,485.13 1472.57,485.79 1472.81,486.45 1472.95,487.12 1473.00,487.80 1472.95,488.48 1472.81,489.15 1472.57,489.81 1472.25,490.47 1471.83,491.10 1471.33,491.72 1470.74,492.32 1470.08,492.88 1469.34,493.42 1468.53,493.93 1467.67,494.40 1466.75,494.84 1465.78,495.23 1464.78,495.59 1463.74,495.90 1462.67,496.16 1461.59,496.39 1460.50,496.56 1459.41,496.69 1458.33,496.78 1457.26,496.82 1456.22,496.81 1455.22,496.77 1454.25,496.68 1453.33,496.55 1452.47,496.39 1451.66,496.19 1450.92,495.95 1450.26,495.69 1449.67,495.40 1449.17,495.09 1448.75,494.76 1448.43,494.42 1448.19,494.06 1448.05,493.69 1448.00,493.32 1448.05,492.96 1448.19,492.59 1448.43,492.23 1448.75,491.89 1449.17,491.56 1449.67,491.25 1450.26,490.96 1450.92,490.70 1451.66,490.46 1452.47,490.26 1453.33,490.10 1454.25,489.97 1455.22,489.88 1456.22,489.84 1457.26,489.83 1458.33,489.87 1459.41,489.96 1460.50,490.09 1461.59,490.26 1462.67,490.49 1463.74,490.75 1464.78,491.06 1465.78,491.42 1466.75,491.81 1467.67,492.25 1468.53,492.72 1469.34,493.23 1470.08,493.77 1470.74,494.33 1471.33,494.93 1471.83,495.55 1472.25,496.18 1472.57,496.84 1472.81,497.50 1472.95,498.17 1473.00,498.85 1472.95,499.53 1472.81,500.20 1472.57,500.86 1472.25,501.52 1471.83,502.15 1471.33,502.77 1470.74,503.37 1470.08,503.93 1469.34,504.47 1468.53,504.98 1467.67,505.45 1466.75,505.89 1465.78,506.28 1464.78,506.64 1463.74,506.95 1462.67,507.21 1461.59,507.44 1460.50,507.61 1459.41,507.74 1458.33,507.83 1457.26,507.87 1456.22,507.86 1455.22,507.82 1454.25,507.73 1453.33,507.60 1452.47,507.44 1451.66,507.24 1450.92,507.00 1450.26,506.74 1449.67,506.45 1449.17,506.14 1448.75,505.81 1448.43,505.47 1448.19,505.11 1448.05,504.74 1448.00,504.38 1448.05,504.01 1448.19,503.64 1448.43,503.28 1448.75,502.94 1449.17,502.61 1449.67,502.30 1450.26,502.01 1450.92,501.75 1451.66,501.51 1452.47,501.31 1453.33,501.15 1454.25,501.02 1455.22,500.93 1456.22,500.89 1457.26,500.88 1458.33,500.92 1459.41,501.01 1460.50,501.14 1461.59,501.31 1462.67,501.54 1463.74,501.80 1464.78,502.11 1465.78,502.47 1466.75,502.86 1467.67,503.30 1468.53,503.77 1469.34,504.28 1470.08,504.82 1470.74,505.38 1471.33,505.98 1471.83,506.60 1472.25,507.23 1472.57,507.89 1472.81,508.55 1472.95,509.22 1473.00,509.90 1472.95,510.58 1472.81,511.25 1472.57,511.91 1472.25,512.57 1471.83,513.20 1471.33,513.82 1470.74,514.42 1470.08,514.98 1469.34,515.52 1468.53,516.03 1467.67,516.50 1466.75,516.94 1465.78,517.33 1464.78,517.69 1463.74,518.00 1462.67,518.26 1461.59,518.49 1460.50,518.66 1459.41,518.79 1458.33,518.88 1457.26,518.92 1456.22,518.91 1455.22,518.87 1454.25,518.78 1453.33,518.65 1452.47,518.49 1451.66,518.29 1450.92,518.05 1450.26,517.79 1449.67,517.50 1449.17,517.19 1448.75,516.86 1448.43,516.52 1448.19,516.16 1448.05,515.79 1448.00,515.42 1448.05,515.06 1448.19,514.69 1448.43,514.33 1448.75,513.99 1449.17,513.66 1449.67,513.35 1450.26,513.06 1450.92,512.80 1451.66,512.56 1452.47,512.36 1453.33,512.20 1454.25,512.07 1455.22,511.98 1456.22,511.94 1457.26,511.93 1458.33,511.97 1459.41,512.06 1460.50,512.19 1461.59,512.36 1462.67,512.59 1463.74,512.85 1464.78,513.16 1465.78,513.52 1466.75,513.91 1467.67,514.35 1468.53,514.82 1469.34,515.33 1470.08,515.87 1470.74,516.43 1471.33,517.03 1471.83,517.65 1472.25,518.28 1472.57,518.94 1472.81,519.60 1472.95,520.27 1473.00,520.95 1472.95,521.63 1472.81,522.30 1472.57,522.96 1472.25,523.62 1471.83,524.25 1471.33,524.87 1470.74,525.47 1470.08,526.03 1469.34,526.57 1468.53,527.08 1467.67,527.55 1466.75,527.99 1465.78,528.38 1464.78,528.74 1463.74,529.05 1462.67,529.31 1461.59,529.54 1460.50,529.71 1459.41,529.84 1458.33,529.93 1457.26,529.97 1456.22,529.96 1455.22,529.92 1454.25,529.83 1453.33,529.70 1452.47,529.54 1451.66,529.34 1450.92,529.10 1450.26,528.84 1449.67,528.55 1449.17,528.24 1448.75,527.91 1448.43,527.57 1448.19,527.21 1448.05,526.84 1448.00,526.48 1448.05,526.11 1448.19,525.74 1448.43,525.38 1448.75,525.04 1449.17,524.71 1449.67,524.40 1450.26,524.11 1450.92,523.85 1451.66,523.61 1452.47,523.41 1453.33,523.25 1454.25,523.12 1455.22,523.03 1456.22,522.99 1457.26,522.98 1458.33,523.02 1459.41,523.11 1460.50,523.24 1461.59,523.41 1462.67,523.64 1463.74,523.90 1464.78,524.21 1465.78,524.57 1466.75,524.96 1467.67,525.40 1468.53,525.87 1469.34,526.38 1470.08,526.92 1470.74,527.48 1471.33,528.08 1471.83,528.70 1472.25,529.33 1472.57,529.99 1472.81,530.65 1472.95,531.32 1473.00,532.00" fill="none" stroke="#111" stroke-width="1.6"/><polyline points="1592.98,508.85 1592.75,508.59 1592.51,508.34 1592.23,508.09 1591.94,507.85 1591.62,507.61 1591.28,507.38 1590.91,507.15 1590.53,506.93 1590.12,506.71 1589.69,506.51 1589.24,506.31 1588.77,506.12 1588.29,505.93 1587.78,505.76 1587.26,505.60 1586.72,505.44 1586.16,505.30 1585.59,505.17 1585.00,505.05 1584.40,504.94 1583.79,504.84 1583.17,504.76 1582.53,504.69 1581.89,504.63 1581.24,504.58 1580.58,504.55 1579.92,504.53 1579.25,504.52 1578.57,504.53 1577.90,504.55 1577.22,504.59 1576.55,504.64 1575.87,504.71 1575.20,504.78 1574.53,504.88 1573.87,504.98 1573.22,505.11 1572.57,505.24 1571.93,505.39 1571.30,505.55 1570.68,505.73 1570.08,505.92 1569.49,506.13 1568.91,506.34 1568.35,506.57 1567.81,506.82 1567.29,507.07 1566.79,507.34 1566.31,507.61 1565.85,507.90 1565.42,508.20 1565.00,508.51 1564.62,508.83 1564.26,509.16 1563.93,509.50 1563.62,509.84 1563.35,510.19 1563.10,510.55 1562.89,510.92 1562.70,511.29 1562.55,511.67 1562.43,512.05 1562.34,512.44 1562.29,512.83 1562.27,513.22 1562.28,513.61 1562.33,514.01 1562.41,514.40 1562.53,514.80 1562.68,515.19 1562.87,515.58 1563.09,515.97 1563.34,516.36 1563.63,516.74 1563.96,517.12 1564.32,517.49 1564.71,517.86 1565.13,518.22 1565.59,518.57 1566.08,518.91 1566.60,519.25 1567.15,519.57 1567.73,519.89 1568.34,520.19 1568.98,520.49 1569.65,520.77 1570.34,521.04 1571.06,521.29 1571.81,521.53 1572.57,521.76 1573.36,521.97 1574.17,522.16 1575.00,522.34 1575.85,522.50 1576.71,522.65 1577.59,522.78 1578.48,522.89 1579.39,522.98 1580.30,523.06 1581.23,523.11 1582.16,523.15 1583.10,523.17 1584.05,523.17 1584.99,523.15 1585.94,523.11 1586.89,523.05 1587.83,522.97 1588.77,522.87 1589.71,522.75 1590.63,522.62 1591.55,522.46 1592.46,522.28 1593.35,522.09 1594.23,521.87 1595.10,521.64 1595.94,521.39 1596.77,521.12 1597.58,520.83 1598.36,520.53 1599.12,520.21 1599.85,519.87 1600.56,519.51 1601.24,519.14 1601.88,518.76 1602.50,518.36 1603.08,517.95 1603.63,517.52 1604.15,517.09 1604.63,516.64 1605.07,516.18 1605.47,515.71 1605.83,515.23 1606.15,514.74 1606.43,514.24 1606.67,513.74 1606.86,513.23 1607.02,512.71 1607.12,512.19 1607.19,511.67 1607.20,511.14 1607.18,510.62 1607.10,510.09 1606.98,509.56 1606.82,509.03 1606.61,508.51 1606.35,507.99 1606.05,507.47 1605.70,506.96 1605.31,506.45 1604.87,505.95 1604.39,505.46 1603.87,504.97 1603.30,504.50 1602.69,504.04 1602.04,503.58 1601.34,503.14 1600.61,502.72 1599.84,502.30 1599.03,501.91 1598.19,501.52 1597.31,501.16 1596.40,500.81 1595.45,500.48 1594.48,500.16 1593.47,499.87 1592.44,499.60 1591.38,499.35 1590.30,499.11 1589.20,498.90 1588.07,498.71 1586.93,498.55 1585.77,498.41 1584.59,498.29 1583.40,498.19 1582.20,498.12 1581.00,498.07 1579.78,498.05 1578.56,498.05 1577.34,498.08 1576.12,498.13 1574.90,498.21 1573.68,498.31 1572.48,498.44 1571.27,498.59 1570.08,498.77 1568.91,498.97 1567.74,499.20 1566.60,499.45 1565.47,499.73 1564.37,500.02 1563.29,500.34 1562.23,500.69 1561.20,501.06 1560.20,501.44 1559.24,501.85 1558.30,502.28 1557.40,502.73 1556.54,503.20 1555.72,503.69 1554.93,504.20 1554.19,504.72 1553.50,505.26 1552.84,505.81 1552.24,506.38 1551.68,506.96 1551.17,507.55 1550.71,508.16 1550.30,508.78 1549.95,509.40 1549.65,510.04 1549.40,510.68 1549.21,511.32 1549.07,511.98 1548.98,512.63 1548.96,513.29 1548.99,513.96 1549.08,514.62 1549.22,515.28 1549.43,515.94 1549.68,516.60 1550.00,517.25 1550.37,517.90 1550.80,518.54 1551.29,519.17 1551.83,519.80 1552.43,520.41 1553.07,521.01 1553.78,521.60 1554.53,522.18 1555.34,522.75 1556.19,523.29 1557.10,523.83 1558.05,524.34 1559.05,524.84 1560.09,525.31 1561.17,525.77 1562.30,526.20 1563.46,526.61 1564.66,527.00 1565.90,527.37 1567.17,527.71 1568.47,528.03 1569.81,528.31 1571.16,528.58 1572.55,528.81 1573.95,529.02 1575.38,529.20 1576.82,529.35 1578.28,529.47 1579.75,529.56 1581.24,529.62 1582.73,529.66 1584.22,529.66 1585.72,529.63 1587.22,529.57 1588.71,529.48 1590.20,529.36 1591.68,529.20 1593.15,529.02 1594.61,528.81 1596.05,528.57 1597.47,528.30 1598.87,527.99 1600.25,527.66 1601.60,527.30 1602.92,526.92 1604.21,526.50 1605.47,526.06 1606.69,525.59 1607.87,525.10 1609.01,524.58 1610.11,524.04 1611.17,523.47 1612.17,522.89 1613.13,522.28 1614.04,521.65 1614.89,521.00 1615.69,520.33 1616.44,519.65 1617.12,518.94 1617.75,518.23 1618.32,517.50 1618.82,516.76 1619.26,516.00 1619.64,515.24 1619.95,514.47 1620.20,513.69 1620.38,512.90 1620.49,512.11 1620.53,511.32 1620.51,510.52 1620.42,509.72 1620.26,508.93 1620.03,508.14 1619.73,507.35 1619.36,506.56 1618.93,505.78 1618.43,505.01 1617.86,504.25 1617.22,503.50" fill="none" stroke="#111" stroke-width="1.6"/><g transform="translate(1700 240) scale(0.20371)" fill="#6a6c94" stroke="#34355a" stroke-width="4.5"><polygon points="468,130 548,38 636,130"/><polygon points="465,910 636,910 548,1002"/><polygon points="65,518 160,435 160,605"/><polygon points="940,435 1035,518 940,605"/><circle cx="972" cy="97" r="48"/><path d="M410,88 Q300,120 232,185 L205,178 L190,292 L290,262 L265,235 Q330,165 422,135 Z"/><path d="M690,88 Q800,120 868,185 L895,178 L910,292 L810,262 L835,235 Q770,165 678,135 Z"/><polygon points="808,822 880,795 955,822 955,900 880,940 808,905"/><path d="M808,822 L880,848 L955,822 M880,848 L880,940" fill="none"/></g><g transform="translate(1750 280) scale(0.125)" stroke="#2f3050" stroke-width="7" stroke-linejoin="round"><path d="M55,250 L165,150 L225,92 L590,38 L710,62 L830,250 L905,295 L940,430 L942,780 L880,840 L765,960 L400,1018 L280,985 L210,930 L70,720 L52,620 Z" fill="#6a6c96"/><path d="M165,150 L290,330 M75,245 L200,420 M290,330 L400,360 L770,305 L825,255 M200,420 L290,330 M400,360 L420,485 M770,305 L800,425 M420,485 L800,425 M800,425 L885,490 L940,435 M200,420 L230,545 M230,545 L340,570 L420,485 M340,570 L345,910 M885,490 L885,830 M345,910 L420,975 L770,930 L885,830 M215,890 L345,910 M420,975 L400,1018" fill="none"/></g><text x="0" y="0" font-size="26" fill="#3d3e52" text-anchor="middle" font-family="Liberation Sans" transform="translate(1819 314) rotate(-9) skewX(-18) scale(1.45 0.8)">上</text><text x="1826" y="385" font-size="40" fill="#3d3e52" text-anchor="middle" font-family="Liberation Sans" transform="rotate(-6 1826 370)">前</text><text x="1768" y="368" font-size="26" fill="#3d3e52" fill-opacity="0.7" text-anchor="middle" font-family="Liberation Sans" transform="translate(1768 352) scale(0.55 1.25) skewY(40) translate(-1768 -352)">左</text><line x1="1778" y1="356" x2="1778" y2="422.5" stroke="#3535c8" stroke-width="1.4"/><line x1="1754.6" y1="387" x2="1778" y2="422.5" stroke="#2fae2f" stroke-width="1.3"/><line x1="1779.4" y1="423" x2="1850.7" y2="411.7" stroke="#b03a4a" stroke-width="1.4"/><line x1="1888" y1="825.4" x2="1888" y2="845.7" stroke="#2020e0" stroke-width="2"/><line x1="1888" y1="845.5" x2="1905.8" y2="843" stroke="#e02020" stroke-width="1.6"/><line x1="1882.2" y1="838.3" x2="1886.9" y2="844.8" stroke="#20d020" stroke-width="2"/><text x="1891.5" y="823" font-size="10" font-weight="bold" fill="#000" text-anchor="middle" font-family="Liberation Sans">z</text><text x="1911.4" y="842" font-size="10" font-weight="bold" fill="#000" text-anchor="middle" font-family="Liberation Sans">x</text><text x="1886.4" y="837" font-size="9" font-weight="bold" fill="#000" text-anchor="middle" font-family="Liberation Sans">y</text></svg>
<div class="ab" style="left:665px;top:881px;width:128px;height:31px;background:#f0f0f0;border:1px solid #e3e3e3;border-radius:5px"></div>
<div class="ab" style="left:797px;top:881px;width:213px;height:31px;background:#f0f0f0;border:1px solid #e3e3e3;border-radius:5px"></div>
<div class="ab" style="left:1014px;top:881px;width:224px;height:31px;background:#fafafa;border:1px solid #ebebeb;border-radius:5px"></div>
<div class="t" style="left:709.57px;top:887px;font-size:17px;transform:scaleX(1.0303);">開始</div>
<div class="t" style="left:842.50px;top:887px;font-size:17px;transform:scaleX(1.0383);">名称未設定 : 1*</div>
<div class="t" style="left:1060.30px;top:887px;font-size:17px;transform:scaleX(1.0320);">名称未設定1 : 1*</div>
<div class="t" style="left:355.30px;top:926px;font-size:17px;transform:scaleX(0.8500);"><span style="letter-spacing:-2.471px">レポートビュー</span></div>
<div class="ab" style="left:2px;top:948px;width:879px;height:79px;background:#fafafa;border:1px solid #ececec;border-bottom:none;border-radius:7px 7px 0 0;overflow:hidden"></div>
<div class="ab" style="left:2px;top:1025px;width:879px;height:3px;background:#2b2b2b"></div>
<div class="t" style="left:1302.73px;top:926px;font-size:17px;transform:scaleX(0.8737);">Python<span style="letter-spacing:0.000px">コンソール</span></div>
<div class="ab" style="left:892.5px;top:948px;width:1025px;height:79px;background:#fafafa;border:1px solid #ececec;border-radius:7px"></div>
<div class="t" style="left:2.79px;top:1048px;font-size:18px;transform:scaleX(0.9613);">Preselected: Unnamed1.Wedge.Face3 (42.510 mm, 0.000 mm, 0.755 mm)</div>
<div class="ab" style="left:1473px;top:1041px;width:106px;height:30px;background:#fbfbfb;border-radius:6px"></div>
<div class="ab" style="left:1594px;top:1041px;width:107px;height:30px;background:#fbfbfb;border-radius:6px"></div>
<div class="ab" style="left:1716px;top:1041px;width:199px;height:30px;background:#fbfbfb;border-radius:6px"></div>
<div class="t" style="left:1506.07px;top:1048px;font-size:18px;transform:scaleX(0.9316);">14</div>
<div class="t" style="left:1626.60px;top:1048px;font-size:18px;transform:scaleX(0.9027);">CAD</div>
<div class="ab" style="left:1719px;top:1040px;width:201px;height:32px;overflow:hidden">
<div class="t" style="left:-2.00px;top:8px;font-size:18px;transform:scaleX(1.0000);">99.20 mm x 50.47 mm</div>
</div>
<svg style="left:0;top:0" width="0" height="0"><defs>
<linearGradient id="bl" x1="0" y1="0" x2="1" y2="1"><stop offset="0" stop-color="#6e9ad8"/><stop offset="1" stop-color="#2a56a0"/></linearGradient>
<radialGradient id="bls" cx="0.4" cy="0.35" r="0.7"><stop offset="0" stop-color="#6e9ad8"/><stop offset="1" stop-color="#24508f"/></radialGradient>
</defs></svg>
<svg style="left:36px;top:400px" width="24" height="24" viewBox="0 0 24 24"><polygon points="2.6,15 9.5,6.3 21.3,8 13.7,18.8" fill="url(#bl)" stroke="#17325e" stroke-width="0.9" stroke-linejoin="round"/><path d="M2.6,15 L13.7,18.8 L21.3,8" fill="none" stroke="#a80c0c" stroke-width="1.9"/><circle cx="2.6" cy="15" r="2.0" fill="#e21c1c" stroke="#7a0a0a" stroke-width="0.6"/><circle cx="13.7" cy="18.8" r="2.0" fill="#e21c1c" stroke="#7a0a0a" stroke-width="0.6"/><circle cx="21.3" cy="8" r="2.0" fill="#e21c1c" stroke="#7a0a0a" stroke-width="0.6"/></svg>
<svg style="left:36px;top:430px" width="24" height="24" viewBox="0 0 24 24"><path d="M2.6,4.8 L13.7,2.4 L21.7,4.4 V17.3 L13.7,20.8 L2.6,19.7 Z" fill="url(#bl)" stroke="#17325e" stroke-width="0.9" stroke-linejoin="round"/><path d="M2.6,4.8 L13.7,7.2 L21.7,4.4" fill="none" stroke="#17325e" stroke-width="0.9" stroke-linejoin="round"/><path d="M13.7,7.2 V20.8 M2.6,19.7 L13.7,20.8 L21.3,17.3" fill="none" stroke="#a80c0c" stroke-width="1.9"/><circle cx="13.7" cy="7.2" r="2.0" fill="#e21c1c" stroke="#7a0a0a" stroke-width="0.6"/><circle cx="2.6" cy="19.7" r="2.0" fill="#e21c1c" stroke="#7a0a0a" stroke-width="0.6"/><circle cx="13.7" cy="20.8" r="2.0" fill="#e21c1c" stroke="#7a0a0a" stroke-width="0.6"/><circle cx="21.3" cy="17.3" r="2.0" fill="#e21c1c" stroke="#7a0a0a" stroke-width="0.6"/></svg>
<svg style="left:36px;top:460px" width="24" height="24" viewBox="0 0 24 24"><path d="M2.3,4.5 V19 C2.3,23 20.3,23 20.3,19 V4.5" fill="url(#bl)" stroke="#17325e" stroke-width="0.9" stroke-linejoin="round"/><ellipse cx="11.3" cy="4.5" rx="9" ry="3" fill="#7aa4dc" stroke="#17325e" stroke-width="0.9" stroke-linejoin="round"/><path d="M2.6,4 H11.6 M20.3,4 V20.2" fill="none" stroke="#a80c0c" stroke-width="1.9"/><circle cx="2.6" cy="4" r="2.0" fill="#e21c1c" stroke="#7a0a0a" stroke-width="0.6"/><circle cx="11.6" cy="4" r="2.0" fill="#e21c1c" stroke="#7a0a0a" stroke-width="0.6"/><circle cx="20.3" cy="4" r="2.0" fill="#e21c1c" stroke="#7a0a0a" stroke-width="0.6"/><circle cx="20.3" cy="20.2" r="2.0" fill="#e21c1c" stroke="#7a0a0a" stroke-width="0.6"/></svg>
<svg style="left:36px;top:490px" width="24" height="24" viewBox="0 0 24 24"><path d="M12.6,2.9 L21.5,19 C21.5,22 3,22 3,19 Z" fill="url(#bl)" stroke="#17325e" stroke-width="0.9" stroke-linejoin="round"/><path d="M12.6,2.9 V19 H4" fill="none" stroke="#a80c0c" stroke-width="1.9"/><circle cx="12.6" cy="3" r="2.0" fill="#e21c1c" stroke="#7a0a0a" stroke-width="0.6"/><circle cx="4" cy="19" r="2.0" fill="#e21c1c" stroke="#7a0a0a" stroke-width="0.6"/><circle cx="12.6" cy="19" r="2.0" fill="#e21c1c" stroke="#7a0a0a" stroke-width="0.6"/></svg>
<svg style="left:36px;top:520px" width="24" height="24" viewBox="0 0 24 24"><circle cx="11.6" cy="12" r="10.8" fill="url(#bls)" stroke="#17325e" stroke-width="0.9" stroke-linejoin="round"/><path d="M11.6,12 L19.5,3.7" fill="none" stroke="#a80c0c" stroke-width="1.9"/><circle cx="11.6" cy="12" r="2.0" fill="#e21c1c" stroke="#7a0a0a" stroke-width="0.6"/><circle cx="19.5" cy="3.7" r="2.0" fill="#e21c1c" stroke="#7a0a0a" stroke-width="0.6"/></svg>
<svg style="left:36px;top:550px" width="24" height="24" viewBox="0 0 24 24"><ellipse cx="12" cy="12" rx="11" ry="6" transform="rotate(-25 12 12)" fill="url(#bls)" stroke="#17325e" stroke-width="0.9" stroke-linejoin="round"/><path d="M10.9,11.9 L21.3,6.6 M10.9,11.9 L15,17.4" fill="none" stroke="#a80c0c" stroke-width="1.9"/><circle cx="10.9" cy="11.9" r="2.0" fill="#e21c1c" stroke="#7a0a0a" stroke-width="0.6"/><circle cx="21.3" cy="6.6" r="2.0" fill="#e21c1c" stroke="#7a0a0a" stroke-width="0.6"/><circle cx="15" cy="17.4" r="2.0" fill="#e21c1c" stroke="#7a0a0a" stroke-width="0.6"/></svg>
<svg style="left:36px;top:580px" width="24" height="24" viewBox="0 0 24 24"><ellipse cx="12" cy="13" rx="10.8" ry="8.2" fill="url(#bl)" stroke="#17325e" stroke-width="0.9" stroke-linejoin="round"/><ellipse cx="12" cy="12.4" rx="4.5" ry="2.4" fill="#fff" stroke="#17325e" stroke-width="0.9" stroke-linejoin="round"/><path d="M12,4.4 V12.4 L20.9,16.9 M12,12.4 L3.7,19.7" fill="none" stroke="#a80c0c" stroke-width="1.9"/><circle cx="12" cy="4.4" r="2.0" fill="#e21c1c" stroke="#7a0a0a" stroke-width="0.6"/><circle cx="12" cy="12.4" r="2.0" fill="#e21c1c" stroke="#7a0a0a" stroke-width="0.6"/><circle cx="20.9" cy="16.9" r="2.0" fill="#e21c1c" stroke="#7a0a0a" stroke-width="0.6"/><circle cx="3.7" cy="19.7" r="2.0" fill="#e21c1c" stroke="#7a0a0a" stroke-width="0.6"/><circle cx="6.7" cy="16.3" r="2.0" fill="#e21c1c" stroke="#7a0a0a" stroke-width="0.6"/></svg>
<svg style="left:36px;top:610px" width="24" height="24" viewBox="0 0 24 24"><path d="M4.6,4 L8,1.2 H17 L20.6,4 V19 L17,22.5 H8 L4.6,19 Z" fill="url(#bl)" stroke="#17325e" stroke-width="0.9" stroke-linejoin="round"/><path d="M4.6,4 L8,6 H17 L20.6,4 M8,6 V22.5 M17,6 V22.5" fill="none" stroke="#17325e" stroke-width="0.9" stroke-linejoin="round"/><path d="M12.9,9.1 V21.1 L7,18.3" fill="none" stroke="#a80c0c" stroke-width="1.9"/><circle cx="12.9" cy="9.1" r="2.0" fill="#e21c1c" stroke="#7a0a0a" stroke-width="0.6"/><circle cx="7" cy="18.3" r="2.0" fill="#e21c1c" stroke="#7a0a0a" stroke-width="0.6"/><circle cx="12.9" cy="21.1" r="2.0" fill="#e21c1c" stroke="#7a0a0a" stroke-width="0.6"/></svg>
<svg style="left:36px;top:640px" width="24" height="24" viewBox="0 0 24 24"><path d="M2.6,6 L13.7,2.4 L21.3,4.5 V10.5 L13.7,19.4 L2.6,18 Z" fill="url(#bl)" stroke="#17325e" stroke-width="0.9" stroke-linejoin="round"/><path d="M2.6,6 L13.7,8 L21.3,4.5" fill="none" stroke="#17325e" stroke-width="0.9" stroke-linejoin="round"/><path d="M13.7,8 V19.4 L2.6,18 M13.7,19.4 L21.3,10.5" fill="none" stroke="#a80c0c" stroke-width="1.9"/><circle cx="13.7" cy="8" r="2.0" fill="#e21c1c" stroke="#7a0a0a" stroke-width="0.6"/><circle cx="21.3" cy="10.5" r="2.0" fill="#e21c1c" stroke="#7a0a0a" stroke-width="0.6"/><circle cx="2.6" cy="18" r="2.0" fill="#e21c1c" stroke="#7a0a0a" stroke-width="0.6"/><circle cx="13.7" cy="19.4" r="2.0" fill="#e21c1c" stroke="#7a0a0a" stroke-width="0.6"/></svg>
<svg style="left:36px;top:670px" width="24" height="24" viewBox="0 0 24 24"><g fill="none" stroke="#17325e" stroke-width="2.6"><ellipse cx="12" cy="4.5" rx="9.5" ry="3" transform="rotate(-8 12 4.5)"/><ellipse cx="12" cy="10" rx="9.5" ry="3" transform="rotate(-8 12 10)"/><ellipse cx="12" cy="15.5" rx="9.5" ry="3" transform="rotate(-8 12 15.5)"/><ellipse cx="12" cy="20.5" rx="9.5" ry="3" transform="rotate(-8 12 20.5)"/></g><g fill="none" stroke="#5a8ad0" stroke-width="1.2"><ellipse cx="12" cy="4.5" rx="9.5" ry="3" transform="rotate(-8 12 4.5)"/><ellipse cx="12" cy="10" rx="9.5" ry="3" transform="rotate(-8 12 10)"/><ellipse cx="12" cy="15.5" rx="9.5" ry="3" transform="rotate(-8 12 15.5)"/><ellipse cx="12" cy="20.5" rx="9.5" ry="3" transform="rotate(-8 12 20.5)"/></g><path d="M10.5,2 V23.5 M3,10.4 V18 M10.5,5 L16,3" fill="none" stroke="#a80c0c" stroke-width="1.9"/><circle cx="3" cy="10.4" r="2.0" fill="#e21c1c" stroke="#7a0a0a" stroke-width="0.6"/><circle cx="3" cy="18" r="2.0" fill="#e21c1c" stroke="#7a0a0a" stroke-width="0.6"/><circle cx="10.5" cy="5" r="2.0" fill="#e21c1c" stroke="#7a0a0a" stroke-width="0.6"/><circle cx="16" cy="3" r="2.0" fill="#e21c1c" stroke="#7a0a0a" stroke-width="0.6"/></svg>
<svg style="left:36px;top:700px" width="24" height="24" viewBox="0 0 24 24"><path d="M13.7,11 C16,13 15,17 11.5,17 C8,17 6.5,13 8,10 C10,6 16,5.5 19,9 C22,13 20.5,20 14,21.5 C8,23 2.5,19 2.5,12.5 C2.5,6 8,2 14,2.2 C17,2.3 19,2.7 20.3,2.7" fill="none" stroke="#2a5aa8" stroke-width="2.4"/><circle cx="20.3" cy="2.7" r="2.0" fill="#e21c1c" stroke="#7a0a0a" stroke-width="0.6"/><circle cx="13.7" cy="11" r="2.0" fill="#e21c1c" stroke="#7a0a0a" stroke-width="0.6"/></svg>
<svg style="left:36px;top:730px" width="24" height="24" viewBox="0 0 24 24"><circle cx="12" cy="11.7" r="10.2" fill="none" stroke="#2a5aa8" stroke-width="2.2"/><path d="M11.7,11.7 L18.7,4.3" fill="none" stroke="#a80c0c" stroke-width="1.9"/><circle cx="11.7" cy="11.7" r="2.0" fill="#e21c1c" stroke="#7a0a0a" stroke-width="0.6"/><circle cx="18.7" cy="4.3" r="2.0" fill="#e21c1c" stroke="#7a0a0a" stroke-width="0.6"/></svg>
<svg style="left:36px;top:760px" width="24" height="24" viewBox="0 0 24 24"><ellipse cx="12" cy="12.2" rx="11" ry="6" transform="rotate(-22 12 12.2)" fill="none" stroke="#2a5aa8" stroke-width="2"/><path d="M19.2,6.3 L9.2,11.3 L11.7,16.3" fill="none" stroke="#a80c0c" stroke-width="1.9"/><circle cx="19.2" cy="6.3" r="2.0" fill="#e21c1c" stroke="#7a0a0a" stroke-width="0.6"/><circle cx="9.2" cy="11.3" r="2.0" fill="#e21c1c" stroke="#7a0a0a" stroke-width="0.6"/><circle cx="11.7" cy="16.3" r="2.0" fill="#e21c1c" stroke="#7a0a0a" stroke-width="0.6"/></svg>
<svg style="left:36px;top:790px" width="24" height="24" viewBox="0 0 24 24"><circle cx="12" cy="11.7" r="4" fill="#2a5aa8"/><circle cx="12" cy="11.7" r="2.2" fill="#e21c1c"/></svg>
<svg style="left:36px;top:820px" width="24" height="24" viewBox="0 0 24 24"><path d="M2.8,20.8 L21.2,2.7" stroke="#1f4a8c" stroke-width="3"/><path d="M2.8,20.8 L21.2,2.7" stroke="#4a7cc4" stroke-width="1.6"/><circle cx="2.8" cy="20.8" r="2.0" fill="#e21c1c" stroke="#7a0a0a" stroke-width="0.6"/><circle cx="21.2" cy="2.7" r="2.0" fill="#e21c1c" stroke="#7a0a0a" stroke-width="0.6"/></svg>
<svg style="left:36px;top:850px" width="24" height="24" viewBox="0 0 24 24"><path d="M11.7,0.8 L22.2,6 V17 L11.7,22 L1.2,17 V6 Z" fill="none" stroke="#2a5aa8" stroke-width="2.2"/><path d="M11.7,14.2 L20.3,8.3 M3.3,18.3 L11.2,22" fill="none" stroke="#a80c0c" stroke-width="1.9"/><circle cx="11.7" cy="14.2" r="2.0" fill="#e21c1c" stroke="#7a0a0a" stroke-width="0.6"/><circle cx="20.3" cy="8.3" r="2.0" fill="#e21c1c" stroke="#7a0a0a" stroke-width="0.6"/><circle cx="3.3" cy="18.3" r="2.0" fill="#e21c1c" stroke="#7a0a0a" stroke-width="0.6"/><circle cx="11.2" cy="22" r="2.0" fill="#e21c1c" stroke="#7a0a0a" stroke-width="0.6"/></svg>
<svg style="left:35px;top:366px" width="24" height="24" viewBox="0 0 24 24"><path d="M13.7,11 C16,13 15,17 11.5,17 C8,17 6.5,13 8,10 C10,6 16,5.5 19,9 C22,13 20.5,20 14,21.5 C8,23 2.5,19 2.5,12.5 C2.5,6 8,2 14,2.2 C17,2.3 19,2.7 20.3,2.7" fill="none" stroke="#2a5aa8" stroke-width="2.4"/><circle cx="20.3" cy="2.7" r="2.0" fill="#e21c1c" stroke="#7a0a0a" stroke-width="0.6"/><circle cx="13.7" cy="11" r="2.0" fill="#e21c1c" stroke="#7a0a0a" stroke-width="0.6"/></svg>
<svg style="left:587px;top:374.5px" width="14" height="8" viewBox="0 0 14 8"><path d="M0.6,0.6 L7,7 L13.4,0.6" fill="none" stroke="#1a1a1a" stroke-width="1.1"/></svg>
<svg style="left:598px;top:314.5px" width="14" height="8" viewBox="0 0 14 8"><path d="M0.8,7.2 L7,1 L13.2,7.2" fill="none" stroke="#e8eef6" stroke-width="2"/></svg>
<svg style="left:606px;top:798px" width="8" height="8" viewBox="0 0 8 8"><path d="M0,0.5 L6,6.5" fill="none" stroke="#e8eef6" stroke-width="2"/></svg>
<svg style="left:545px;top:905.5px" width="12" height="6" viewBox="0 0 12 6"><path d="M0.6,5.6 L6,0.6 L11.4,5.6" fill="none" stroke="#222" stroke-width="1.2"/></svg>
<svg style="left:569.5px;top:905.5px" width="14" height="6" viewBox="0 0 14 6"><path d="M0.6,0.6 L7,5.6 L13.4,0.6" fill="none" stroke="#222" stroke-width="1.2"/></svg>
<svg style="left:602px;top:279px" width="15" height="15" viewBox="0 0 15 15"><rect x="0.8" y="0.8" width="13.4" height="13.4" rx="0.8" fill="none" stroke="#6e6e6e" stroke-width="1.6"/><path d="M0.8,4.6 H14.2" stroke="#6e6e6e" stroke-width="1.5"/></svg>
<svg style="left:635px;top:279px" width="15" height="15" viewBox="0 0 15 15"><rect x="0.8" y="4.8" width="9.4" height="9.4" rx="0.6" fill="none" stroke="#6e6e6e" stroke-width="1.6"/><path d="M4.8,4.8 V0.8 H14.2 V10.2 H10.2" fill="none" stroke="#6e6e6e" stroke-width="1.6" stroke-linejoin="round"/></svg>
<svg style="left:796.5px;top:925.5px" width="15" height="15" viewBox="0 0 15 15"><rect x="0.8" y="0.8" width="13.4" height="13.4" rx="0.8" fill="none" stroke="#6e6e6e" stroke-width="1.6"/><path d="M0.8,4.6 H14.2" stroke="#6e6e6e" stroke-width="1.5"/></svg>
<svg style="left:829.5px;top:925.5px" width="15" height="15" viewBox="0 0 15 15"><rect x="0.8" y="4.8" width="9.4" height="9.4" rx="0.6" fill="none" stroke="#6e6e6e" stroke-width="1.6"/><path d="M4.8,4.8 V0.8 H14.2 V10.2 H10.2" fill="none" stroke="#6e6e6e" stroke-width="1.6" stroke-linejoin="round"/></svg>
<svg style="left:862.5px;top:925.5px" width="15" height="15" viewBox="0 0 15 15"><path d="M1.2,1.2 L13.8,13.8 M13.8,1.2 L1.2,13.8" stroke="#6e6e6e" stroke-width="2.3" stroke-linecap="round"/></svg>
<svg style="left:1833.5px;top:925.5px" width="15" height="15" viewBox="0 0 15 15"><rect x="0.8" y="0.8" width="13.4" height="13.4" rx="0.8" fill="none" stroke="#6e6e6e" stroke-width="1.6"/><path d="M0.8,4.6 H14.2" stroke="#6e6e6e" stroke-width="1.5"/></svg>
<svg style="left:1866.5px;top:925.5px" width="15" height="15" viewBox="0 0 15 15"><rect x="0.8" y="4.8" width="9.4" height="9.4" rx="0.6" fill="none" stroke="#6e6e6e" stroke-width="1.6"/><path d="M4.8,4.8 V0.8 H14.2 V10.2 H10.2" fill="none" stroke="#6e6e6e" stroke-width="1.6" stroke-linejoin="round"/></svg>
<svg style="left:1899px;top:925.5px" width="15" height="15" viewBox="0 0 15 15"><path d="M1.2,1.2 L13.8,13.8 M13.8,1.2 L1.2,13.8" stroke="#6e6e6e" stroke-width="2.3" stroke-linecap="round"/></svg>
<svg style="left:4px;top:5px" width="21" height="25" viewBox="0 0 21 25"><g transform="translate(-4,-5)"><path d="M4,9.3 L8.3,5 H24 V13 H20.5 V9 H8 V25 H12 L8.5,29 H4 Z" fill="#c9283a"/><path d="M16,5 H24 V13 L20.5,13 V9 H12 Z" fill="#ff4f5e"/><path d="M4,25 H12 L8.5,29 H4 Z" fill="#ff4f5e"/><path d="M8,9 H20.5 V13 H12 V15.5 H16 V20 H12 V25 H8 Z" fill="#fff"/><path d="M12,13 H20.5 L24,9.5 V13.5 L21,16 L24,18.5 L22.5,21.5 L19,21 L20,25.3 L17.5,27 L15,25 L13,26 L12.5,29 H8.5 L12,25 V20 H16 V15.5 H12 Z" fill="#4590dc"/></g></svg>
<svg style="left:96px;top:241px" width="24" height="24" viewBox="0 0 24 24"><path d="M1,5 L4.5,1.2 L21,17.5 L23,23 L17.5,21 Z" fill="#3a6ab0" stroke="#111" stroke-width="1"/><path d="M17.5,21 L21,17.5 L23,23 Z" fill="#e8e8e8" stroke="#111" stroke-width="0.8"/><path d="M21.2,21.2 L23,23" stroke="#111" stroke-width="2"/></svg>
<svg style="left:681px;top:880px" width="21.0" height="25.0" viewBox="0 0 21.0 25.0"><g transform="scale(1.0) translate(-4,-5)"><path d="M4,9.3 L8.3,5 H24 V13 H20.5 V9 H8 V25 H12 L8.5,29 H4 Z" fill="#c9283a"/><path d="M16,5 H24 V13 L20.5,13 V9 H12 Z" fill="#ff4f5e"/><path d="M4,25 H12 L8.5,29 H4 Z" fill="#ff4f5e"/><path d="M8,9 H20.5 V13 H12 V15.5 H16 V20 H12 V25 H8 Z" fill="#fff"/><path d="M12,13 H20.5 L24,9.5 V13.5 L21,16 L24,18.5 L22.5,21.5 L19,21 L20,25.3 L17.5,27 L15,25 L13,26 L12.5,29 H8.5 L12,25 V20 H16 V15.5 H12 Z" fill="#4590dc"/></g></svg>
<svg style="left:816px;top:881px" width="17" height="24" viewBox="0 0 17 24"><path d="M1,0.5 H12 L16,4.5 V23.5 H1 Z" fill="#f4f4f4" stroke="#333" stroke-width="0.9"/><path d="M3.5,10 L9,8 L14,10 V17 L9,20 L3.5,17 Z" fill="#2a56a0" stroke="#0d2550" stroke-width="0.6"/><path d="M3.5,10 L9,12 L14,10" fill="none" stroke="#8ab0e8" stroke-width="0.8"/><circle cx="11.5" cy="7.5" r="3.6" fill="#e02020"/></svg>
<svg style="left:1034px;top:882px" width="17" height="24" viewBox="0 0 17 24"><path d="M1,0.5 H12 L16,4.5 V23.5 H1 Z" fill="#f4f4f4" stroke="#333" stroke-width="0.9"/><path d="M3.5,10 L9,8 L14,10 V17 L9,20 L3.5,17 Z" fill="#2a56a0" stroke="#0d2550" stroke-width="0.6"/><path d="M3.5,10 L9,12 L14,10" fill="none" stroke="#8ab0e8" stroke-width="0.8"/><circle cx="11.5" cy="7.5" r="3.6" fill="#e02020"/></svg>
<svg style="left:752px;top:884px" width="21" height="21" viewBox="0 0 21 21"><rect x="0.5" y="0.5" width="20" height="20" rx="2" fill="#c4c4c4" stroke="#9a9a9a"/><path d="M6,6 L15,15 M15,6 L6,15" stroke="#fff" stroke-width="1.8"/></svg>
<svg style="left:970px;top:884px" width="21" height="21" viewBox="0 0 21 21"><rect x="0.5" y="0.5" width="20" height="20" rx="2" fill="#c4c4c4" stroke="#9a9a9a"/><path d="M6,6 L15,15 M15,6 L6,15" stroke="#fff" stroke-width="1.8"/></svg>
<svg style="left:1198px;top:884px" width="21" height="21" viewBox="0 0 21 21"><rect x="0.5" y="0.5" width="20" height="20" rx="2" fill="#e46048" stroke="#b43020"/><path d="M6,6 L15,15 M15,6 L6,15" stroke="#fff" stroke-width="1.8"/></svg>
<div class="ab" style="left:2px;top:948px;width:879px;height:78px;overflow:hidden">
<div class="t" style="left:6px;top:-3.0px;font-family:'Liberation Mono',monospace;font-size:22px;color:#ffaa00;transform:scaleX(0.7386)">11,&nbsp;11&nbsp;minimum&nbsp;size:&nbsp;654x888&nbsp;MINMAXINFO(maxSize=POINT(x=0,&nbsp;y=0),&nbsp;maxpos=POINT(x=0,</div>
<div class="t" style="left:6px;top:16.3px;font-family:'Liberation Mono',monospace;font-size:22px;color:#ffaa00;transform:scaleX(0.7386)">y=0),&nbsp;maxtrack=POINT(x=0,&nbsp;y=0),&nbsp;mintrack=POINT(x=1003,&nbsp;y=1388)))</div>
<div class="t" style="left:6px;top:35.6px;font-family:'Liberation Mono',monospace;font-size:22px;color:#ffaa00;transform:scaleX(0.7386)">10:29:32&nbsp;&nbsp;QWindowsWindow::setGeometry:&nbsp;Unable&nbsp;to&nbsp;set&nbsp;geometry&nbsp;1920x1193-1920+1119</div>
<div class="t" style="left:6px;top:54.8px;font-family:'Liberation Mono',monospace;font-size:22px;color:#ffaa00;transform:scaleX(0.7386)">(frame:&nbsp;1942x1249-1931+1074)&nbsp;on&nbsp;QWidgetWindow/”Gui::MainWindowClassWindow”&nbsp;on&nbsp;”FHD”.</div>
<div class="t" style="left:6px;top:74.1px;font-family:'Liberation Mono',monospace;font-size:22px;color:#ffaa00;transform:scaleX(0.7386)">Resulting&nbsp;geometry:&nbsp;1920x1046-1920+1119&nbsp;(frame:&nbsp;1942x1102-1931+1074)&nbsp;margins:&nbsp;11,&nbsp;45,&nbsp;11,&nbsp;11</div>
</div>
<div class="ab" style="left:872.3px;top:982px;width:1.5px;height:26.5px;background:#9a9a9a;border-radius:1px"></div>
<div class="t" style="left:896px;top:947.8px;font-family:'Liberation Mono',monospace;font-size:22px;color:#808080;transform:scaleX(0.7386)">&gt;&gt;&gt;&nbsp;<span style="color:#111">App<span style="color:#888">.</span>ActiveDocument<span style="color:#888">.</span>recompute<span style="color:#999">()</span></span></div>
<div class="t" style="left:896px;top:967.0px;font-family:'Liberation Mono',monospace;font-size:22px;color:#808080;transform:scaleX(0.7386)">&gt;&gt;&gt;&nbsp;<span style="color:#00a000">#&nbsp;Gui.SendMsgToActiveView(”ViewFit”)</span></div>
<div class="t" style="left:896px;top:986.2px;font-family:'Liberation Mono',monospace;font-size:22px;color:#808080;transform:scaleX(0.7386)">&gt;&gt;&gt;<span style="color:#111"></span></div>
<div class="ab" style="left:1909px;top:984px;width:1.5px;height:26px;background:#9a9a9a;border-radius:1px"></div>
<div class="ab" style="left:1445px;top:1033px;width:1px;height:44px;background:#d0d0d0"></div>
<div class="ab" style="left:1454px;top:1033px;width:1px;height:44px;background:#d0d0d0"></div>
<div class="ab" style="left:1463px;top:1033px;width:1px;height:44px;background:#d0d0d0"></div>
<div class="ab" style="left:1585px;top:1043px;width:1px;height:31px;background:#d0d0d0"></div>
<div class="ab" style="left:1706px;top:1043px;width:1px;height:31px;background:#d0d0d0"></div>
<div class="ab" style="left:1674px;top:1043px;width:1px;height:27px;background:#e0e0e0"></div>
<div class="ab" style="left:1889px;top:1043px;width:1px;height:27px;background:#e0e0e0"></div>
<svg style="left:1478px;top:1046px" width="21" height="21" viewBox="0 0 21 21"><rect x="0.5" y="0.5" width="20" height="20" fill="url(#bl)" stroke="#1a3a70" stroke-width="0.8"/><path d="M1,1 L10.5,10 L20,1" fill="none" stroke="#8ab0e8" stroke-width="0.8"/></svg>
<svg style="left:1605px;top:1045px" width="14" height="22" viewBox="0 0 14 22"><rect x="1" y="1" width="12" height="20" rx="6" fill="none" stroke="#222" stroke-width="1.6"/><path d="M7,4 V8" stroke="#222" stroke-width="1.6"/></svg>
<svg style="left:1683px;top:1052px" width="14" height="8" viewBox="0 0 14 8"><path d="M0.6,0.6 L7,7 L13.4,0.6" fill="none" stroke="#222" stroke-width="1.3"/></svg>
<svg style="left:1893px;top:1052px" width="16" height="9" viewBox="0 0 16 9"><path d="M0.6,0.6 L8,8 L15.4,0.6" fill="none" stroke="#222" stroke-width="1.3"/></svg>
</body></html>
